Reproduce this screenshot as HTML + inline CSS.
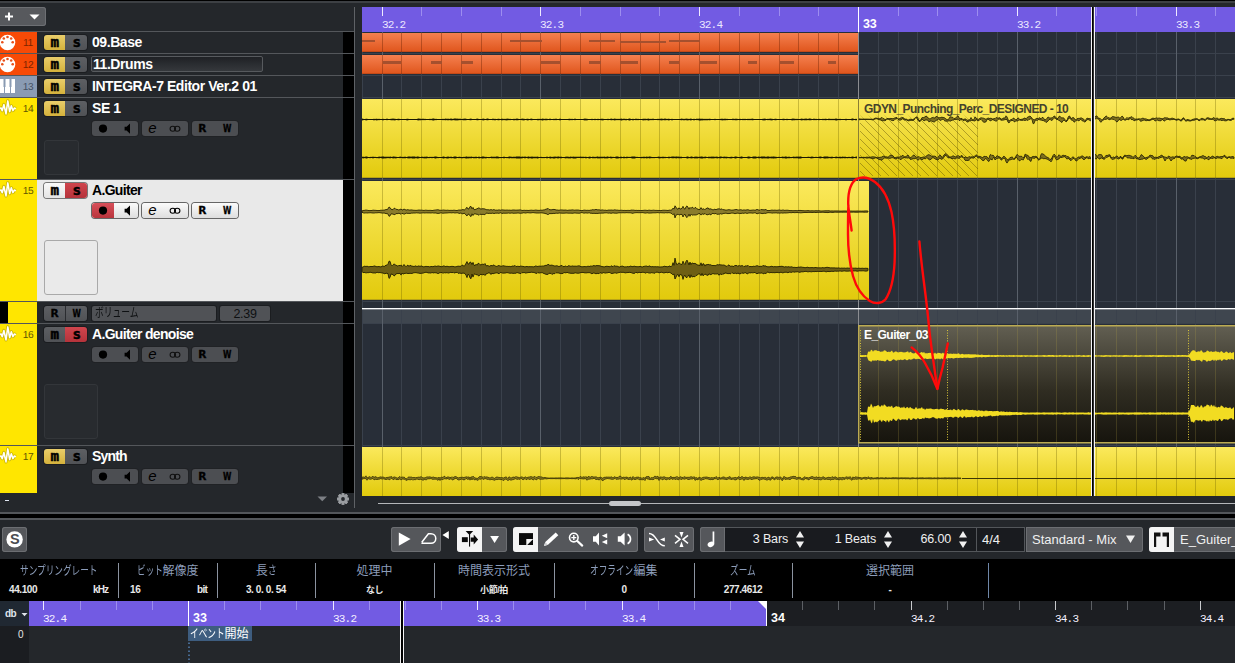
<!DOCTYPE html><html><head><meta charset="utf-8"><title>Cubase</title><style>*{box-sizing:border-box;margin:0;padding:0}
html,body{width:1235px;height:663px;overflow:hidden;background:#24272b}
body{position:relative;font-family:"Liberation Sans","Noto Sans CJK JP",sans-serif;font-size:12px;color:#fff}
.a{position:absolute}
svg{position:absolute;left:0;top:0;overflow:visible}
/* track list */
.sep{position:absolute;left:0;width:354px;height:1px;background:#54575b}
.strip{position:absolute;left:0;width:37px}
.num{position:absolute;left:21px;width:14px;text-align:center;font-size:10.2px;line-height:12px;letter-spacing:-0.3px;text-rendering:geometricPrecision}
.tname{position:absolute;left:92px;font-weight:bold;font-size:14px;line-height:16px;letter-spacing:-0.44px;white-space:nowrap;color:#fff}
.ms{position:absolute;left:44px;width:43px;height:15px;border-radius:3px;overflow:hidden;box-shadow:0 0 0 1px #1b1d20}
.ms i{position:absolute;top:0;height:15px;width:21px;font-style:normal}
.ms .m{left:0;background:linear-gradient(#e9cd6a,#d5b23c)}
.ms .s{left:21px;width:22px;background:linear-gradient(#5d5f63,#505256)}
.ms .m.off{background:linear-gradient(#5d5f63,#505256)}
.ms .s.on{background:linear-gradient(#d0454d,#b5333b)}
.sel .ms{box-shadow:0 0 0 1px #777}
.sel .ms .m.off{background:linear-gradient(#fafafa,#e4e4e4)}
.grp{position:absolute;width:46px;height:15px;border-radius:3px;background:#4c4e52;box-shadow:0 0 0 1px #202225;overflow:hidden}
.sel .grp{background:linear-gradient(#fbfbfb,#dedede);box-shadow:0 0 0 1px #666}
.thumb{position:absolute;left:44px;border:1px solid #33363a;border-radius:3px;background:#282b2f}
.sel .thumb{border-color:#a9a9a9;background:#eaeaea}
/* lower */
.tb{position:absolute;top:527px;height:25px;border-radius:3px;background:#55575b;box-shadow:inset 0 0 0 1px #6c6e72;overflow:hidden}
.ui{font-family:"Liberation Sans","Noto Sans CJK JP",sans-serif;font-size:13px;line-height:25px;color:#f0f0f0;white-space:nowrap}
.lab{position:absolute;top:564px;font-size:12px;line-height:14px;color:#8c9dba;text-align:center;white-space:nowrap}
.val{position:absolute;top:584px;font-size:10px;line-height:12px;font-weight:bold;color:#e8e8e8;white-space:nowrap;letter-spacing:-0.4px}
.vs{position:absolute;top:563px;width:1px;height:35px;background:#8b93a0}
.rl{position:absolute;font-family:"Liberation Mono",monospace;font-size:11px;line-height:12px;color:#f4f0ff;white-space:nowrap}
.rb{position:absolute;font-family:"Liberation Sans",sans-serif;font-weight:bold;font-size:12.5px;line-height:14px;color:#fff;white-space:nowrap}
</style></head><body>
<div class="a" style="left:0;top:0;width:1235px;height:1px;background:#000"></div>
<div class="a" style="left:0;top:1px;width:1235px;height:2px;background:#3d4044"></div>
<div class="a" style="left:-3px;top:7px;width:49px;height:19px;border-radius:3px;background:#57595d;box-shadow:inset 0 0 0 1px #6d6f73"></div>
<svg width="60" height="32"><path d="M5 16.5h8M9 12.5v8" stroke="#fff" stroke-width="2" fill="none"/><path d="M29.5 14.5h10l-5 5z" fill="#fff"/></svg>
<div class="a" style="left:0;top:32px;width:354px;height:21px">
<div class="a" style="left:37px;top:0;width:306px;height:21px;background:#24272b"></div>
<div class="strip" style="top:0;height:21px;background:#f74a06"></div>
<div class="num" style="top:6px;color:#7d2400">11</div>
<div class="ms" style="top:3px"><i class="m"></i><i class="s"></i></div>
<div class="tname" style="top:2px;">09.Base</div>
</div>
<div class="a" style="left:0;top:54px;width:354px;height:21px">
<div class="a" style="left:37px;top:0;width:306px;height:21px;background:#24272b"></div>
<div class="strip" style="top:0;height:21px;background:#f74a06"></div>
<div class="num" style="top:6px;color:#7d2400">12</div>
<div class="ms" style="top:3px"><i class="m"></i><i class="s"></i></div>
<div class="a" style="left:91px;top:2px;width:172px;height:16px;background:linear-gradient(#1f2125,#35383c);border:1px solid #575a5e;border-radius:2px"></div>
<div class="tname" style="top:2px;left:93px;">11.Drums</div>
</div>
<div class="a" style="left:0;top:76px;width:354px;height:21px">
<div class="a" style="left:37px;top:0;width:306px;height:21px;background:#24272b"></div>
<div class="strip" style="top:0;height:21px;background:#8a9bb3"></div>
<div class="num" style="top:6px;color:#465264">13</div>
<div class="ms" style="top:3px"><i class="m"></i><i class="s"></i></div>
<div class="tname" style="top:2px;">INTEGRA-7 Editor Ver.2 01</div>
</div>
<div class="a" style="left:0;top:98px;width:354px;height:81px">
<div class="a" style="left:37px;top:0;width:306px;height:81px;background:#24272b"></div>
<div class="strip" style="top:0;height:81px;background:#ffe600"></div>
<div class="num" style="top:6px;color:#5f5600">14</div>
<div class="ms" style="top:3px"><i class="m"></i><i class="s"></i></div>
<div class="tname" style="top:2px;">SE 1</div>
<div class="grp" style="left:92px;top:23px"></div>
<div class="grp" style="left:142px;top:23px"></div>
<div class="grp" style="left:192px;top:23px"></div>
</div>
<div class="thumb" style="top:140px;width:35px;height:35px"></div>
<div class="a sel" style="left:0;top:180px;width:354px;height:121px">
<div class="a" style="left:37px;top:0;width:306px;height:121px;background:#e9e9e9"></div>
<div class="strip" style="top:0;height:121px;background:#ffe600"></div>
<div class="num" style="top:6px;color:#5f5600">15</div>
<div class="ms" style="top:3px"><i class="m off"></i><i class="s on"></i></div>
<div class="tname" style="top:2px;letter-spacing:-0.68px;color:#000;">A.Guiter</div>
<div class="grp" style="left:92px;top:23px"></div>
<div class="grp" style="left:142px;top:23px"></div>
<div class="grp" style="left:192px;top:23px"></div>
<div class="a" style="left:92px;top:23px;width:22px;height:15px;border-radius:3px 0 0 3px;background:linear-gradient(#d8505a,#b8343c)"></div>
</div>
<div class="a sel"><div class="thumb" style="top:240px;width:54px;height:55px"></div></div>
<div class="a" style="left:0;top:324px;width:354px;height:121px">
<div class="a" style="left:37px;top:0;width:306px;height:121px;background:#24272b"></div>
<div class="strip" style="top:0;height:121px;background:#ffe600"></div>
<div class="num" style="top:6px;color:#5f5600">16</div>
<div class="ms" style="top:3px"><i class="m off"></i><i class="s on"></i></div>
<div class="tname" style="top:2px;letter-spacing:-0.68px;">A.Guiter denoise</div>
<div class="grp" style="left:92px;top:23px"></div>
<div class="grp" style="left:142px;top:23px"></div>
<div class="grp" style="left:192px;top:23px"></div>
</div>
<div class="thumb" style="top:384px;width:54px;height:55px"></div>
<div class="a" style="left:0;top:446px;width:354px;height:47px">
<div class="a" style="left:37px;top:0;width:306px;height:47px;background:#24272b"></div>
<div class="strip" style="top:0;height:47px;background:#ffe600"></div>
<div class="num" style="top:6px;color:#5f5600">17</div>
<div class="ms" style="top:3px"><i class="m"></i><i class="s"></i></div>
<div class="tname" style="top:2px;letter-spacing:-0.85px;">Synth</div>
<div class="grp" style="left:92px;top:23px"></div>
<div class="grp" style="left:142px;top:23px"></div>
<div class="grp" style="left:192px;top:23px"></div>
</div>
<div class="a" style="left:0;top:302px;width:8px;height:21px;background:#000"></div>
<div class="a" style="left:8px;top:302px;width:29px;height:21px;background:#ffe600"></div>
<div class="ms" style="top:306px"><i class="m off"></i><i class="s"></i><i style="left:21px;width:1px;background:#2a2c30"></i></div>
<div class="a" style="left:92px;top:306px;width:124px;height:15px;border-radius:2px;background:#505256;box-shadow:0 0 0 1px #1b1d20"></div>
<div class="a" style="left:95px;top:306px;font-size:12.5px;line-height:15px;color:#0e1012;white-space:nowrap"><span style="display:inline-block;transform:scaleX(0.7);transform-origin:0 50%;margin-right:-18.00px">ボリューム</span></div>
<div class="a" style="left:220px;top:306px;width:50px;height:15px;border-radius:2px;background:#505256;box-shadow:0 0 0 1px #1b1d20"></div>
<div class="a" style="left:220px;top:306px;width:50px;text-align:center;font-size:12.5px;line-height:16px;color:#0e1012;letter-spacing:-0.3px">2.39</div>
<div class="sep" style="top:31px"></div>
<div class="sep" style="top:53px"></div>
<div class="sep" style="top:75px"></div>
<div class="sep" style="top:97px"></div>
<div class="sep" style="top:179px"></div>
<div class="sep" style="top:301px"></div>
<div class="sep" style="top:323px"></div>
<div class="sep" style="top:445px"></div>
<div class="a" style="left:343px;top:32px;width:11px;height:461px;background:#000"></div>
<div class="a" style="left:354px;top:7px;width:1px;height:501px;background:#5f6266"></div>
<div class="a" style="left:343px;top:53px;width:11px;height:1px;background:#54575b"></div>
<div class="a" style="left:343px;top:75px;width:11px;height:1px;background:#54575b"></div>
<div class="a" style="left:343px;top:97px;width:11px;height:1px;background:#54575b"></div>
<div class="a" style="left:343px;top:179px;width:11px;height:1px;background:#54575b"></div>
<div class="a" style="left:343px;top:301px;width:11px;height:1px;background:#54575b"></div>
<div class="a" style="left:343px;top:323px;width:11px;height:1px;background:#54575b"></div>
<div class="a" style="left:343px;top:445px;width:11px;height:1px;background:#54575b"></div>
<div class="a" style="left:5px;top:500px;width:4px;height:1px;background:#dfe6f2"></div>
<svg width="362" height="520"><style>.msg{font:bold 13.8px "DejaVu Sans Mono",monospace;fill:#000;stroke:#000;stroke-width:0.45px}.rw{font:bold 10.4px "DejaVu Sans",sans-serif;fill:#000;stroke:#000;stroke-width:0.3px}.eg{font:italic 15px "Liberation Sans",sans-serif;fill:#000}</style><circle cx="7.5" cy="42.5" r="7.8" fill="#fff"/><circle cx="2.3" cy="42.2" r="1.3" fill="#e8501a"/><circle cx="3.8" cy="38.5" r="1.3" fill="#e8501a"/><circle cx="7.5" cy="37.0" r="1.3" fill="#e8501a"/><circle cx="11.2" cy="38.5" r="1.3" fill="#e8501a"/><circle cx="12.7" cy="42.2" r="1.3" fill="#e8501a"/><text x="50.6" y="47" class="msg" textLength="8.6" lengthAdjust="spacingAndGlyphs">m</text><text x="72.6" y="47" class="msg" textLength="8.6" lengthAdjust="spacingAndGlyphs">s</text><circle cx="7.5" cy="64.5" r="7.8" fill="#fff"/><circle cx="2.3" cy="64.2" r="1.3" fill="#e8501a"/><circle cx="3.8" cy="60.5" r="1.3" fill="#e8501a"/><circle cx="7.5" cy="59.0" r="1.3" fill="#e8501a"/><circle cx="11.2" cy="60.5" r="1.3" fill="#e8501a"/><circle cx="12.7" cy="64.2" r="1.3" fill="#e8501a"/><text x="50.6" y="69" class="msg" textLength="8.6" lengthAdjust="spacingAndGlyphs">m</text><text x="72.6" y="69" class="msg" textLength="8.6" lengthAdjust="spacingAndGlyphs">s</text><rect x="0" y="79" width="15" height="14" fill="#fff"/><rect x="3.5" y="79" width="2" height="8" fill="#8a9bb3"/><rect x="4" y="87" width="1" height="6" fill="#8a9bb3"/><rect x="9.5" y="79" width="2" height="8" fill="#8a9bb3"/><rect x="10" y="87" width="1" height="6" fill="#8a9bb3"/><text x="50.6" y="91" class="msg" textLength="8.6" lengthAdjust="spacingAndGlyphs">m</text><text x="72.6" y="91" class="msg" textLength="8.6" lengthAdjust="spacingAndGlyphs">s</text><polyline points="0.0,108.7 1.0,107.9 2.2,110.7 3.9,104.5 6.0,113.9 7.8,100.9 9.7,111.6 11.3,105.8 12.9,110.6 14.3,108.1 15.9,108.7" fill="none" stroke="#9c8a00" stroke-opacity="0.5" stroke-width="3.2" stroke-linejoin="round"/><polyline points="0.0,108.7 1.0,107.9 2.2,110.7 3.9,104.5 6.0,113.9 7.8,100.9 9.7,111.6 11.3,105.8 12.9,110.6 14.3,108.1 15.9,108.7" fill="none" stroke="#fff" stroke-width="1.55" stroke-linejoin="round"/><text x="50.6" y="113" class="msg" textLength="8.6" lengthAdjust="spacingAndGlyphs">m</text><text x="72.6" y="113" class="msg" textLength="8.6" lengthAdjust="spacingAndGlyphs">s</text><circle cx="103" cy="128.6" r="4.1" fill="#000"/><path d="M124.6 126.7 h2 l3.4 -3.2 v10.2 l-3.4 -3.2 h-2 z" fill="#000"/><text x="152.3" y="132.6" class="eg" text-anchor="middle">e</text><g fill="none" stroke="#111" stroke-width="1.1"><ellipse cx="172.8" cy="128.8" rx="2.7" ry="2.5"/><ellipse cx="177.2" cy="128.8" rx="2.7" ry="2.5"/></g><text x="198.2" y="132.2" class="rw" textLength="8.2" lengthAdjust="spacingAndGlyphs">R</text><text x="223" y="132.2" class="rw" textLength="8.4" lengthAdjust="spacingAndGlyphs">W</text><polyline points="0.0,190.7 1.0,189.9 2.2,192.7 3.9,186.5 6.0,195.9 7.8,182.9 9.7,193.6 11.3,187.8 12.9,192.6 14.3,190.1 15.9,190.7" fill="none" stroke="#9c8a00" stroke-opacity="0.5" stroke-width="3.2" stroke-linejoin="round"/><polyline points="0.0,190.7 1.0,189.9 2.2,192.7 3.9,186.5 6.0,195.9 7.8,182.9 9.7,193.6 11.3,187.8 12.9,192.6 14.3,190.1 15.9,190.7" fill="none" stroke="#fff" stroke-width="1.55" stroke-linejoin="round"/><text x="50.6" y="195" class="msg" textLength="8.6" lengthAdjust="spacingAndGlyphs">m</text><text x="72.6" y="195" class="msg" textLength="8.6" lengthAdjust="spacingAndGlyphs">s</text><circle cx="103" cy="210.6" r="4.1" fill="#000"/><path d="M124.6 208.7 h2 l3.4 -3.2 v10.2 l-3.4 -3.2 h-2 z" fill="#000"/><text x="152.3" y="214.6" class="eg" text-anchor="middle">e</text><g fill="none" stroke="#000" stroke-width="1.1"><ellipse cx="172.8" cy="210.8" rx="2.7" ry="2.5"/><ellipse cx="177.2" cy="210.8" rx="2.7" ry="2.5"/></g><text x="198.2" y="214.2" class="rw" textLength="8.2" lengthAdjust="spacingAndGlyphs">R</text><text x="223" y="214.2" class="rw" textLength="8.4" lengthAdjust="spacingAndGlyphs">W</text><polyline points="0.0,334.7 1.0,333.9 2.2,336.7 3.9,330.5 6.0,339.9 7.8,326.9 9.7,337.6 11.3,331.8 12.9,336.6 14.3,334.1 15.9,334.7" fill="none" stroke="#9c8a00" stroke-opacity="0.5" stroke-width="3.2" stroke-linejoin="round"/><polyline points="0.0,334.7 1.0,333.9 2.2,336.7 3.9,330.5 6.0,339.9 7.8,326.9 9.7,337.6 11.3,331.8 12.9,336.6 14.3,334.1 15.9,334.7" fill="none" stroke="#fff" stroke-width="1.55" stroke-linejoin="round"/><text x="50.6" y="339" class="msg" textLength="8.6" lengthAdjust="spacingAndGlyphs">m</text><text x="72.6" y="339" class="msg" textLength="8.6" lengthAdjust="spacingAndGlyphs">s</text><circle cx="103" cy="354.6" r="4.1" fill="#000"/><path d="M124.6 352.7 h2 l3.4 -3.2 v10.2 l-3.4 -3.2 h-2 z" fill="#000"/><text x="152.3" y="358.6" class="eg" text-anchor="middle">e</text><g fill="none" stroke="#111" stroke-width="1.1"><ellipse cx="172.8" cy="354.8" rx="2.7" ry="2.5"/><ellipse cx="177.2" cy="354.8" rx="2.7" ry="2.5"/></g><text x="198.2" y="358.2" class="rw" textLength="8.2" lengthAdjust="spacingAndGlyphs">R</text><text x="223" y="358.2" class="rw" textLength="8.4" lengthAdjust="spacingAndGlyphs">W</text><polyline points="0.0,456.7 1.0,455.9 2.2,458.7 3.9,452.5 6.0,461.9 7.8,448.9 9.7,459.6 11.3,453.8 12.9,458.6 14.3,456.1 15.9,456.7" fill="none" stroke="#9c8a00" stroke-opacity="0.5" stroke-width="3.2" stroke-linejoin="round"/><polyline points="0.0,456.7 1.0,455.9 2.2,458.7 3.9,452.5 6.0,461.9 7.8,448.9 9.7,459.6 11.3,453.8 12.9,458.6 14.3,456.1 15.9,456.7" fill="none" stroke="#fff" stroke-width="1.55" stroke-linejoin="round"/><text x="50.6" y="461" class="msg" textLength="8.6" lengthAdjust="spacingAndGlyphs">m</text><text x="72.6" y="461" class="msg" textLength="8.6" lengthAdjust="spacingAndGlyphs">s</text><circle cx="103" cy="476.6" r="4.1" fill="#000"/><path d="M124.6 474.7 h2 l3.4 -3.2 v10.2 l-3.4 -3.2 h-2 z" fill="#000"/><text x="152.3" y="480.6" class="eg" text-anchor="middle">e</text><g fill="none" stroke="#111" stroke-width="1.1"><ellipse cx="172.8" cy="476.8" rx="2.7" ry="2.5"/><ellipse cx="177.2" cy="476.8" rx="2.7" ry="2.5"/></g><text x="198.2" y="480.2" class="rw" textLength="8.2" lengthAdjust="spacingAndGlyphs">R</text><text x="223" y="480.2" class="rw" textLength="8.4" lengthAdjust="spacingAndGlyphs">W</text><text x="50.6" y="317.4" class="rw" textLength="8.2" lengthAdjust="spacingAndGlyphs">R</text><text x="72.4" y="317.4" class="rw" textLength="8.4" lengthAdjust="spacingAndGlyphs">W</text><path d="M317.5 496.5h9.5l-4.75 4.8z" fill="#7d8085"/><rect x="341.6" y="493.2" width="2.8" height="11.6" rx="0.6" transform="rotate(0 343 499)" fill="#9a9da1"/><rect x="341.6" y="493.2" width="2.8" height="11.6" rx="0.6" transform="rotate(45 343 499)" fill="#9a9da1"/><rect x="341.6" y="493.2" width="2.8" height="11.6" rx="0.6" transform="rotate(90 343 499)" fill="#9a9da1"/><rect x="341.6" y="493.2" width="2.8" height="11.6" rx="0.6" transform="rotate(135 343 499)" fill="#9a9da1"/><rect x="341.6" y="493.2" width="2.8" height="11.6" rx="0.6" transform="rotate(180 343 499)" fill="#9a9da1"/><rect x="341.6" y="493.2" width="2.8" height="11.6" rx="0.6" transform="rotate(225 343 499)" fill="#9a9da1"/><rect x="341.6" y="493.2" width="2.8" height="11.6" rx="0.6" transform="rotate(270 343 499)" fill="#9a9da1"/><rect x="341.6" y="493.2" width="2.8" height="11.6" rx="0.6" transform="rotate(315 343 499)" fill="#9a9da1"/><circle cx="343" cy="499" r="4.1" fill="#9a9da1"/><circle cx="343" cy="499" r="1.9" fill="#24272b"/></svg>
<svg width="1235" height="520" shape-rendering="auto"><defs><linearGradient id="gy" x1="0" y1="0" x2="0" y2="1"><stop offset="0" stop-color="#fbe95c"/><stop offset="1" stop-color="#e2ca0c"/></linearGradient><linearGradient id="go" x1="0" y1="0" x2="0" y2="1"><stop offset="0" stop-color="#f5804f"/><stop offset="1" stop-color="#df551c"/></linearGradient><linearGradient id="gd" x1="0" y1="0" x2="0" y2="1"><stop offset="0" stop-color="#625f52"/><stop offset="0.55" stop-color="#302d22"/><stop offset="1" stop-color="#16140d"/></linearGradient><pattern id="hatch" width="8" height="8" patternUnits="userSpaceOnUse" patternTransform="translate(0,7)"><path d="M0 0L8 8M-2 6L2 10M6 -2L10 2" stroke="#5f5208" stroke-opacity="0.5" stroke-width="0.9" fill="none"/></pattern><linearGradient id="hf" x1="0" y1="0" x2="0" y2="1"><stop offset="0" stop-color="#fff" stop-opacity="0"/><stop offset="0.12" stop-color="#fff" stop-opacity="1"/><stop offset="1" stop-color="#fff"/></linearGradient><mask id="hm"><rect x="860" y="114" width="118" height="62" fill="url(#hf)"/></mask></defs><rect x="362" y="32" width="873" height="464" fill="#282e38"/><rect x="362" y="7" width="873" height="25" fill="#725be3"/><rect x="362" y="309" width="873" height="14" fill="#3f464f"/><rect x="362" y="53" width="873" height="1" fill="#3a414c"/><rect x="362" y="75" width="873" height="1" fill="#3a414c"/><rect x="362" y="97" width="873" height="1" fill="#3a414c"/><rect x="362" y="179" width="873" height="1" fill="#3a414c"/><rect x="362" y="301" width="873" height="1" fill="#3a414c"/><rect x="362" y="323" width="873" height="1" fill="#3a414c"/><rect x="362" y="445" width="873" height="1" fill="#3a414c"/><rect x="362" y="32" width="1" height="464" fill="#3a414c"/><rect x="382" y="32" width="1" height="464" fill="#59606a"/><rect x="401" y="32" width="1" height="464" fill="#3a414c"/><rect x="421" y="32" width="1" height="464" fill="#3a414c"/><rect x="441" y="32" width="1" height="464" fill="#3a414c"/><rect x="461" y="32" width="1" height="464" fill="#3a414c"/><rect x="481" y="32" width="1" height="464" fill="#3a414c"/><rect x="501" y="32" width="1" height="464" fill="#3a414c"/><rect x="520" y="32" width="1" height="464" fill="#3a414c"/><rect x="540" y="32" width="1" height="464" fill="#59606a"/><rect x="560" y="32" width="1" height="464" fill="#3a414c"/><rect x="580" y="32" width="1" height="464" fill="#3a414c"/><rect x="600" y="32" width="1" height="464" fill="#3a414c"/><rect x="620" y="32" width="1" height="464" fill="#3a414c"/><rect x="640" y="32" width="1" height="464" fill="#3a414c"/><rect x="659" y="32" width="1" height="464" fill="#3a414c"/><rect x="679" y="32" width="1" height="464" fill="#3a414c"/><rect x="699" y="32" width="1" height="464" fill="#59606a"/><rect x="719" y="32" width="1" height="464" fill="#3a414c"/><rect x="739" y="32" width="1" height="464" fill="#3a414c"/><rect x="759" y="32" width="1" height="464" fill="#3a414c"/><rect x="779" y="32" width="1" height="464" fill="#3a414c"/><rect x="798" y="32" width="1" height="464" fill="#3a414c"/><rect x="818" y="32" width="1" height="464" fill="#3a414c"/><rect x="838" y="32" width="1" height="464" fill="#3a414c"/><rect x="858" y="32" width="1" height="464" fill="#8b8d91"/><rect x="878" y="32" width="1" height="464" fill="#3a414c"/><rect x="898" y="32" width="1" height="464" fill="#3a414c"/><rect x="917" y="32" width="1" height="464" fill="#3a414c"/><rect x="937" y="32" width="1" height="464" fill="#3a414c"/><rect x="957" y="32" width="1" height="464" fill="#3a414c"/><rect x="977" y="32" width="1" height="464" fill="#3a414c"/><rect x="997" y="32" width="1" height="464" fill="#3a414c"/><rect x="1017" y="32" width="1" height="464" fill="#59606a"/><rect x="1037" y="32" width="1" height="464" fill="#3a414c"/><rect x="1056" y="32" width="1" height="464" fill="#3a414c"/><rect x="1076" y="32" width="1" height="464" fill="#3a414c"/><rect x="1096" y="32" width="1" height="464" fill="#3a414c"/><rect x="1116" y="32" width="1" height="464" fill="#3a414c"/><rect x="1136" y="32" width="1" height="464" fill="#3a414c"/><rect x="1156" y="32" width="1" height="464" fill="#3a414c"/><rect x="1176" y="32" width="1" height="464" fill="#59606a"/><rect x="1195" y="32" width="1" height="464" fill="#3a414c"/><rect x="1215" y="32" width="1" height="464" fill="#3a414c"/><rect x="362" y="308" width="873" height="1" fill="#fbfcfd"/><rect x="362" y="309" width="873" height="1" fill="#fff" fill-opacity="0.35"/><rect x="362" y="33" width="496" height="19" fill="url(#go)"/><rect x="362" y="51" width="496" height="1" fill="#c44a18"/><rect x="382" y="33" width="1" height="19" fill="#7a2a08" fill-opacity="0.45"/><rect x="401" y="33" width="1" height="19" fill="#7a2a08" fill-opacity="0.45"/><rect x="421" y="33" width="1" height="19" fill="#7a2a08" fill-opacity="0.45"/><rect x="441" y="33" width="1" height="19" fill="#7a2a08" fill-opacity="0.45"/><rect x="461" y="33" width="1" height="19" fill="#7a2a08" fill-opacity="0.45"/><rect x="481" y="33" width="1" height="19" fill="#7a2a08" fill-opacity="0.45"/><rect x="501" y="33" width="1" height="19" fill="#7a2a08" fill-opacity="0.45"/><rect x="520" y="33" width="1" height="19" fill="#7a2a08" fill-opacity="0.45"/><rect x="540" y="33" width="1" height="19" fill="#7a2a08" fill-opacity="0.45"/><rect x="560" y="33" width="1" height="19" fill="#7a2a08" fill-opacity="0.45"/><rect x="580" y="33" width="1" height="19" fill="#7a2a08" fill-opacity="0.45"/><rect x="600" y="33" width="1" height="19" fill="#7a2a08" fill-opacity="0.45"/><rect x="620" y="33" width="1" height="19" fill="#7a2a08" fill-opacity="0.45"/><rect x="640" y="33" width="1" height="19" fill="#7a2a08" fill-opacity="0.45"/><rect x="659" y="33" width="1" height="19" fill="#7a2a08" fill-opacity="0.45"/><rect x="679" y="33" width="1" height="19" fill="#7a2a08" fill-opacity="0.45"/><rect x="699" y="33" width="1" height="19" fill="#7a2a08" fill-opacity="0.45"/><rect x="719" y="33" width="1" height="19" fill="#7a2a08" fill-opacity="0.45"/><rect x="739" y="33" width="1" height="19" fill="#7a2a08" fill-opacity="0.45"/><rect x="759" y="33" width="1" height="19" fill="#7a2a08" fill-opacity="0.45"/><rect x="779" y="33" width="1" height="19" fill="#7a2a08" fill-opacity="0.45"/><rect x="798" y="33" width="1" height="19" fill="#7a2a08" fill-opacity="0.45"/><rect x="818" y="33" width="1" height="19" fill="#7a2a08" fill-opacity="0.45"/><rect x="838" y="33" width="1" height="19" fill="#7a2a08" fill-opacity="0.45"/><rect x="362" y="55" width="496" height="19" fill="url(#go)"/><rect x="362" y="73" width="496" height="1" fill="#c44a18"/><rect x="382" y="55" width="1" height="19" fill="#7a2a08" fill-opacity="0.45"/><rect x="401" y="55" width="1" height="19" fill="#7a2a08" fill-opacity="0.45"/><rect x="421" y="55" width="1" height="19" fill="#7a2a08" fill-opacity="0.45"/><rect x="441" y="55" width="1" height="19" fill="#7a2a08" fill-opacity="0.45"/><rect x="461" y="55" width="1" height="19" fill="#7a2a08" fill-opacity="0.45"/><rect x="481" y="55" width="1" height="19" fill="#7a2a08" fill-opacity="0.45"/><rect x="501" y="55" width="1" height="19" fill="#7a2a08" fill-opacity="0.45"/><rect x="520" y="55" width="1" height="19" fill="#7a2a08" fill-opacity="0.45"/><rect x="540" y="55" width="1" height="19" fill="#7a2a08" fill-opacity="0.45"/><rect x="560" y="55" width="1" height="19" fill="#7a2a08" fill-opacity="0.45"/><rect x="580" y="55" width="1" height="19" fill="#7a2a08" fill-opacity="0.45"/><rect x="600" y="55" width="1" height="19" fill="#7a2a08" fill-opacity="0.45"/><rect x="620" y="55" width="1" height="19" fill="#7a2a08" fill-opacity="0.45"/><rect x="640" y="55" width="1" height="19" fill="#7a2a08" fill-opacity="0.45"/><rect x="659" y="55" width="1" height="19" fill="#7a2a08" fill-opacity="0.45"/><rect x="679" y="55" width="1" height="19" fill="#7a2a08" fill-opacity="0.45"/><rect x="699" y="55" width="1" height="19" fill="#7a2a08" fill-opacity="0.45"/><rect x="719" y="55" width="1" height="19" fill="#7a2a08" fill-opacity="0.45"/><rect x="739" y="55" width="1" height="19" fill="#7a2a08" fill-opacity="0.45"/><rect x="759" y="55" width="1" height="19" fill="#7a2a08" fill-opacity="0.45"/><rect x="779" y="55" width="1" height="19" fill="#7a2a08" fill-opacity="0.45"/><rect x="798" y="55" width="1" height="19" fill="#7a2a08" fill-opacity="0.45"/><rect x="818" y="55" width="1" height="19" fill="#7a2a08" fill-opacity="0.45"/><rect x="838" y="55" width="1" height="19" fill="#7a2a08" fill-opacity="0.45"/><rect x="362" y="40" width="13" height="2" fill="#a5502e"/><rect x="510" y="40" width="32" height="2" fill="#a5502e"/><rect x="589" y="40" width="26" height="2" fill="#a5502e"/><rect x="620" y="41" width="46" height="2" fill="#a5502e"/><rect x="669" y="40" width="31" height="2" fill="#a5502e"/><rect x="383" y="61" width="18" height="3" fill="#a5502e"/><rect x="431" y="61" width="11" height="3" fill="#a5502e"/><rect x="461" y="61" width="12" height="3" fill="#a5502e"/><rect x="541" y="61" width="19" height="3" fill="#a5502e"/><rect x="589" y="61" width="12" height="3" fill="#a5502e"/><rect x="620" y="61" width="18" height="3" fill="#a5502e"/><rect x="669" y="61" width="10" height="3" fill="#a5502e"/><rect x="700" y="61" width="17" height="3" fill="#a5502e"/><rect x="748" y="61" width="9" height="3" fill="#a5502e"/><rect x="780" y="61" width="14" height="3" fill="#a5502e"/><rect x="828" y="61" width="8" height="3" fill="#a5502e"/><rect x="362" y="99" width="496" height="79" fill="url(#gy)"/><rect x="859" y="99" width="376" height="79" fill="url(#gy)"/><rect x="362" y="177" width="873" height="1" fill="#b8a416"/><rect x="382" y="99" width="1" height="79" fill="#6b5d00" fill-opacity="0.33"/><rect x="401" y="99" width="1" height="79" fill="#6b5d00" fill-opacity="0.33"/><rect x="421" y="99" width="1" height="79" fill="#6b5d00" fill-opacity="0.33"/><rect x="441" y="99" width="1" height="79" fill="#6b5d00" fill-opacity="0.33"/><rect x="461" y="99" width="1" height="79" fill="#6b5d00" fill-opacity="0.33"/><rect x="481" y="99" width="1" height="79" fill="#6b5d00" fill-opacity="0.33"/><rect x="501" y="99" width="1" height="79" fill="#6b5d00" fill-opacity="0.33"/><rect x="520" y="99" width="1" height="79" fill="#6b5d00" fill-opacity="0.33"/><rect x="540" y="99" width="1" height="79" fill="#6b5d00" fill-opacity="0.33"/><rect x="560" y="99" width="1" height="79" fill="#6b5d00" fill-opacity="0.33"/><rect x="580" y="99" width="1" height="79" fill="#6b5d00" fill-opacity="0.33"/><rect x="600" y="99" width="1" height="79" fill="#6b5d00" fill-opacity="0.33"/><rect x="620" y="99" width="1" height="79" fill="#6b5d00" fill-opacity="0.33"/><rect x="640" y="99" width="1" height="79" fill="#6b5d00" fill-opacity="0.33"/><rect x="659" y="99" width="1" height="79" fill="#6b5d00" fill-opacity="0.33"/><rect x="679" y="99" width="1" height="79" fill="#6b5d00" fill-opacity="0.33"/><rect x="699" y="99" width="1" height="79" fill="#6b5d00" fill-opacity="0.33"/><rect x="719" y="99" width="1" height="79" fill="#6b5d00" fill-opacity="0.33"/><rect x="739" y="99" width="1" height="79" fill="#6b5d00" fill-opacity="0.33"/><rect x="759" y="99" width="1" height="79" fill="#6b5d00" fill-opacity="0.33"/><rect x="779" y="99" width="1" height="79" fill="#6b5d00" fill-opacity="0.33"/><rect x="798" y="99" width="1" height="79" fill="#6b5d00" fill-opacity="0.33"/><rect x="818" y="99" width="1" height="79" fill="#6b5d00" fill-opacity="0.33"/><rect x="838" y="99" width="1" height="79" fill="#6b5d00" fill-opacity="0.33"/><rect x="858" y="99" width="1" height="79" fill="#6b5d00" fill-opacity="0.33"/><rect x="878" y="99" width="1" height="79" fill="#6b5d00" fill-opacity="0.33"/><rect x="898" y="99" width="1" height="79" fill="#6b5d00" fill-opacity="0.33"/><rect x="917" y="99" width="1" height="79" fill="#6b5d00" fill-opacity="0.33"/><rect x="937" y="99" width="1" height="79" fill="#6b5d00" fill-opacity="0.33"/><rect x="957" y="99" width="1" height="79" fill="#6b5d00" fill-opacity="0.33"/><rect x="977" y="99" width="1" height="79" fill="#6b5d00" fill-opacity="0.33"/><rect x="997" y="99" width="1" height="79" fill="#6b5d00" fill-opacity="0.33"/><rect x="1017" y="99" width="1" height="79" fill="#6b5d00" fill-opacity="0.33"/><rect x="1037" y="99" width="1" height="79" fill="#6b5d00" fill-opacity="0.33"/><rect x="1056" y="99" width="1" height="79" fill="#6b5d00" fill-opacity="0.33"/><rect x="1076" y="99" width="1" height="79" fill="#6b5d00" fill-opacity="0.33"/><rect x="1096" y="99" width="1" height="79" fill="#6b5d00" fill-opacity="0.33"/><rect x="1116" y="99" width="1" height="79" fill="#6b5d00" fill-opacity="0.33"/><rect x="1136" y="99" width="1" height="79" fill="#6b5d00" fill-opacity="0.33"/><rect x="1156" y="99" width="1" height="79" fill="#6b5d00" fill-opacity="0.33"/><rect x="1176" y="99" width="1" height="79" fill="#6b5d00" fill-opacity="0.33"/><rect x="1195" y="99" width="1" height="79" fill="#6b5d00" fill-opacity="0.33"/><rect x="1215" y="99" width="1" height="79" fill="#6b5d00" fill-opacity="0.33"/><rect x="858" y="99" width="1" height="79" fill="#8a7d33"/><rect x="860" y="114" width="118" height="62" fill="url(#hatch)" mask="url(#hm)"/><polygon points="362,118.6 363,118.8 364,119.1 365,119.0 366,118.7 367,118.8 368,119.0 369,119.0 370,119.0 371,119.0 372,119.1 373,119.0 374,118.7 375,119.0 376,118.7 377,118.8 378,119.1 379,118.7 380,119.1 381,119.1 382,119.0 383,118.7 384,119.0 385,119.1 386,119.1 387,118.6 388,119.0 389,119.0 390,119.0 391,118.8 392,118.8 393,118.6 394,118.7 395,118.7 396,119.0 397,119.0 398,118.7 399,118.7 400,119.0 401,119.0 402,119.1 403,119.1 404,119.1 405,119.0 406,119.1 407,118.8 408,118.8 409,119.1 410,119.0 411,119.1 412,119.1 413,119.0 414,119.0 415,119.0 416,119.0 417,119.0 418,118.6 419,118.6 420,118.7 421,118.8 422,119.0 423,118.6 424,119.0 425,118.7 426,119.0 427,119.0 428,119.0 429,119.1 430,118.8 431,119.1 432,118.7 433,118.6 434,118.6 435,119.0 436,118.8 437,119.1 438,119.1 439,119.1 440,119.0 441,119.1 442,119.1 443,118.7 444,119.1 445,118.7 446,118.6 447,119.1 448,118.6 449,119.0 450,118.8 451,118.6 452,118.8 453,119.1 454,118.6 455,118.6 456,118.6 457,118.7 458,118.6 459,119.0 460,118.6 461,119.0 462,119.0 463,118.7 464,118.7 465,118.6 466,118.7 467,119.0 468,119.1 469,119.0 470,118.7 471,118.6 472,119.0 473,119.0 474,119.0 475,119.1 476,119.1 477,118.6 478,118.7 479,119.0 480,119.0 481,119.0 482,119.0 483,118.6 484,118.8 485,119.1 486,119.0 487,118.6 488,118.6 489,119.1 490,119.0 491,119.1 492,119.0 493,118.6 494,119.1 495,118.7 496,119.0 497,119.0 498,118.7 499,118.8 500,119.0 501,119.0 502,118.6 503,119.1 504,118.7 505,119.1 506,118.7 507,118.7 508,118.6 509,119.1 510,118.8 511,119.1 512,119.1 513,119.0 514,118.8 515,119.0 516,118.7 517,118.6 518,118.7 519,119.0 520,119.0 521,119.0 522,118.6 523,118.8 524,118.7 525,119.0 526,119.0 527,118.8 528,118.7 529,119.1 530,119.0 531,118.6 532,118.8 533,119.1 534,119.1 535,119.1 536,119.1 537,119.0 538,118.8 539,119.0 540,118.8 541,119.0 542,118.7 543,118.6 544,119.1 545,118.7 546,118.7 547,118.7 548,119.1 549,119.0 550,118.6 551,119.0 552,119.1 553,119.0 554,118.7 555,119.1 556,118.6 557,119.1 558,119.0 559,119.1 560,118.6 561,119.1 562,119.0 563,119.0 564,119.1 565,119.1 566,119.1 567,119.1 568,119.1 569,118.7 570,118.7 571,119.0 572,118.7 573,119.0 574,119.0 575,118.6 576,119.1 577,119.0 578,119.0 579,119.1 580,119.1 581,119.0 582,119.1 583,119.0 584,118.7 585,118.6 586,118.7 587,118.7 588,119.0 589,119.1 590,119.0 591,119.0 592,118.7 593,119.1 594,119.1 595,118.7 596,119.0 597,119.0 598,118.8 599,119.1 600,119.1 601,118.7 602,118.7 603,118.8 604,119.1 605,119.0 606,119.1 607,119.1 608,118.8 609,119.1 610,119.1 611,118.6 612,118.8 613,119.1 614,118.8 615,118.6 616,119.0 617,118.8 618,119.0 619,118.7 620,119.1 621,118.6 622,118.7 623,119.1 624,118.6 625,119.0 626,118.8 627,119.1 628,119.1 629,118.6 630,118.6 631,119.1 632,119.0 633,118.7 634,119.1 635,119.0 636,118.6 637,119.0 638,118.8 639,119.0 640,119.1 641,119.1 642,119.1 643,118.7 644,118.7 645,118.7 646,118.7 647,119.0 648,118.6 649,118.8 650,119.0 651,118.8 652,119.1 653,118.6 654,119.1 655,119.1 656,119.1 657,119.0 658,118.8 659,119.1 660,118.8 661,118.7 662,118.6 663,119.0 664,118.8 665,118.6 666,118.7 667,119.0 668,118.8 669,118.7 670,119.0 671,119.1 672,118.8 673,119.0 674,119.0 675,119.0 676,119.1 677,119.1 678,119.0 679,119.0 680,119.1 681,118.7 682,118.6 683,119.0 684,118.7 685,119.1 686,118.6 687,118.7 688,118.8 689,119.1 690,118.8 691,118.6 692,119.1 693,119.0 694,118.8 695,119.1 696,119.0 697,118.6 698,119.0 699,118.6 700,118.8 701,118.8 702,118.8 703,118.8 704,119.1 705,118.7 706,119.1 707,118.7 708,119.0 709,118.7 710,118.8 711,119.0 712,119.0 713,119.0 714,119.0 715,118.8 716,119.1 717,119.1 718,119.1 719,119.0 720,119.1 721,118.7 722,118.8 723,118.8 724,119.0 725,118.6 726,119.0 727,118.8 728,119.1 729,119.1 730,119.1 731,119.0 732,119.0 733,118.6 734,119.0 735,118.7 736,118.8 737,118.8 738,119.1 739,119.1 740,118.8 741,119.0 742,119.1 743,118.8 744,119.1 745,118.7 746,119.0 747,119.0 748,118.8 749,119.0 750,118.8 751,119.1 752,118.6 753,118.7 754,119.0 755,119.1 756,119.0 757,119.0 758,119.1 759,119.0 760,119.1 761,119.1 762,119.1 763,118.8 764,118.7 765,118.6 766,119.1 767,119.1 768,118.7 769,119.0 770,118.6 771,118.7 772,118.7 773,119.0 774,119.0 775,118.7 776,118.7 777,119.0 778,119.1 779,119.0 780,119.0 781,119.0 782,119.0 783,118.7 784,118.7 785,119.0 786,119.1 787,118.7 788,119.1 789,119.1 790,119.1 791,119.1 792,118.7 793,118.6 794,118.7 795,118.7 796,119.0 797,118.8 798,119.0 799,119.1 800,119.1 801,118.8 802,118.6 803,119.0 804,118.7 805,118.7 806,118.6 807,118.7 808,119.1 809,118.6 810,118.6 811,118.8 812,119.1 813,119.0 814,118.6 815,119.0 816,118.7 817,119.0 818,119.1 819,118.8 820,119.1 821,119.1 822,119.0 823,118.7 824,119.0 825,118.7 826,118.7 827,119.1 828,119.0 829,118.6 830,119.1 831,118.7 832,119.0 833,118.7 834,119.0 835,118.7 836,118.6 837,118.7 838,119.1 839,119.1 840,118.7 841,119.1 842,119.1 843,119.0 844,119.0 845,119.1 846,118.7 847,119.1 848,119.0 849,119.1 850,119.0 851,119.0 852,118.6 853,118.6 854,119.1 855,119.0 856,118.8 857,119.1 857,120.0 856,120.4 855,119.9 854,119.9 853,120.3 852,120.4 851,120.0 850,119.9 849,119.9 848,119.9 847,120.0 846,120.4 845,120.0 844,119.9 843,119.9 842,119.9 841,119.9 840,120.2 839,120.0 838,120.0 837,120.4 836,120.4 835,120.3 834,120.0 833,120.3 832,120.0 831,120.3 830,119.9 829,120.3 828,120.0 827,119.9 826,120.2 825,120.2 824,119.9 823,120.2 822,119.9 821,119.9 820,120.0 819,120.3 818,119.9 817,120.0 816,120.3 815,120.0 814,120.2 813,119.9 812,120.0 811,120.3 810,120.3 809,120.3 808,119.9 807,120.3 806,120.2 805,120.3 804,120.2 803,119.9 802,120.4 801,120.2 800,119.9 799,119.9 798,120.0 797,120.2 796,120.0 795,120.2 794,120.2 793,120.2 792,120.4 791,120.0 790,119.9 789,119.9 788,119.9 787,120.3 786,120.0 785,120.0 784,120.3 783,120.2 782,119.9 781,120.0 780,119.9 779,120.0 778,119.9 777,120.0 776,120.2 775,120.2 774,120.0 773,120.0 772,120.4 771,120.3 770,120.3 769,119.9 768,120.2 767,120.0 766,119.9 765,120.4 764,120.3 763,120.4 762,120.0 761,120.0 760,119.9 759,119.9 758,120.0 757,120.0 756,120.0 755,119.9 754,119.9 753,120.3 752,120.3 751,119.9 750,120.2 749,119.9 748,120.2 747,120.0 746,119.9 745,120.2 744,119.9 743,120.2 742,119.9 741,120.0 740,120.3 739,120.0 738,119.9 737,120.3 736,120.3 735,120.3 734,119.9 733,120.2 732,119.9 731,120.0 730,120.0 729,119.9 728,119.9 727,120.3 726,120.0 725,120.4 724,119.9 723,120.4 722,120.2 721,120.3 720,119.9 719,119.9 718,119.9 717,119.9 716,119.9 715,120.2 714,119.9 713,119.9 712,119.9 711,120.0 710,120.3 709,120.3 708,119.9 707,120.4 706,119.9 705,120.4 704,119.9 703,120.4 702,120.2 701,120.4 700,120.4 699,120.4 698,119.9 697,120.2 696,120.0 695,120.0 694,120.4 693,120.0 692,120.0 691,120.4 690,120.2 689,120.0 688,120.4 687,120.2 686,120.3 685,120.0 684,120.4 683,119.9 682,120.3 681,120.2 680,120.0 679,119.9 678,119.9 677,119.9 676,119.9 675,120.0 674,120.0 673,119.9 672,120.4 671,120.0 670,120.0 669,120.4 668,120.3 667,119.9 666,120.3 665,120.3 664,120.3 663,119.9 662,120.4 661,120.2 660,120.2 659,120.0 658,120.3 657,120.0 656,119.9 655,120.0 654,119.9 653,120.3 652,120.0 651,120.3 650,119.9 649,120.4 648,120.4 647,119.9 646,120.2 645,120.3 644,120.2 643,120.4 642,119.9 641,119.9 640,120.0 639,120.0 638,120.3 637,119.9 636,120.2 635,120.0 634,120.0 633,120.4 632,119.9 631,119.9 630,120.4 629,120.4 628,119.9 627,119.9 626,120.4 625,119.9 624,120.3 623,119.9 622,120.4 621,120.4 620,119.9 619,120.2 618,119.9 617,120.3 616,120.0 615,120.4 614,120.3 613,120.0 612,120.2 611,120.2 610,120.0 609,120.0 608,120.3 607,119.9 606,119.9 605,120.0 604,120.0 603,120.4 602,120.3 601,120.3 600,119.9 599,119.9 598,120.3 597,119.9 596,120.0 595,120.3 594,119.9 593,119.9 592,120.2 591,119.9 590,119.9 589,119.9 588,120.0 587,120.4 586,120.2 585,120.4 584,120.2 583,120.0 582,119.9 581,120.0 580,120.0 579,120.0 578,120.0 577,119.9 576,119.9 575,120.2 574,120.0 573,119.9 572,120.3 571,119.9 570,120.2 569,120.3 568,120.0 567,119.9 566,120.0 565,119.9 564,120.0 563,119.9 562,120.0 561,119.9 560,120.4 559,119.9 558,120.0 557,120.0 556,120.2 555,120.0 554,120.2 553,119.9 552,119.9 551,120.0 550,120.3 549,120.0 548,120.0 547,120.3 546,120.3 545,120.3 544,120.0 543,120.4 542,120.4 541,119.9 540,120.2 539,119.9 538,120.4 537,120.0 536,120.0 535,119.9 534,120.0 533,120.0 532,120.2 531,120.2 530,120.0 529,119.9 528,120.4 527,120.3 526,120.0 525,120.0 524,120.4 523,120.2 522,120.3 521,120.0 520,119.9 519,120.0 518,120.2 517,120.2 516,120.2 515,119.9 514,120.4 513,120.0 512,119.9 511,120.0 510,120.3 509,119.9 508,120.2 507,120.2 506,120.4 505,119.9 504,120.2 503,119.9 502,120.4 501,120.0 500,119.9 499,120.3 498,120.3 497,119.9 496,119.9 495,120.4 494,119.9 493,120.2 492,120.0 491,119.9 490,119.9 489,119.9 488,120.3 487,120.3 486,120.0 485,119.9 484,120.2 483,120.4 482,120.0 481,120.0 480,120.0 479,120.0 478,120.3 477,120.3 476,119.9 475,119.9 474,120.0 473,120.0 472,119.9 471,120.3 470,120.3 469,119.9 468,119.9 467,120.0 466,120.3 465,120.3 464,120.2 463,120.3 462,119.9 461,119.9 460,120.2 459,119.9 458,120.4 457,120.2 456,120.4 455,120.3 454,120.3 453,120.0 452,120.4 451,120.3 450,120.3 449,119.9 448,120.4 447,119.9 446,120.3 445,120.3 444,119.9 443,120.3 442,119.9 441,120.0 440,119.9 439,120.0 438,120.0 437,120.0 436,120.2 435,120.0 434,120.4 433,120.4 432,120.3 431,119.9 430,120.2 429,119.9 428,120.0 427,119.9 426,119.9 425,120.3 424,120.0 423,120.3 422,119.9 421,120.3 420,120.3 419,120.2 418,120.4 417,120.0 416,120.0 415,119.9 414,119.9 413,120.0 412,120.0 411,120.0 410,119.9 409,119.9 408,120.3 407,120.4 406,120.0 405,119.9 404,120.0 403,120.0 402,120.0 401,119.9 400,120.0 399,120.2 398,120.2 397,120.0 396,119.9 395,120.4 394,120.3 393,120.3 392,120.3 391,120.2 390,119.9 389,119.9 388,120.0 387,120.3 386,120.0 385,120.0 384,120.0 383,120.4 382,120.0 381,119.9 380,119.9 379,120.3 378,120.0 377,120.4 376,120.3 375,119.9 374,120.4 373,120.0 372,119.9 371,119.9 370,120.0 369,119.9 368,120.0 367,120.2 366,120.4 365,120.0 364,120.0 363,120.2 362,120.4" fill="#1a1700" stroke-linejoin="round"/><polygon points="362,156.9 363,156.4 364,157.0 365,156.8 366,156.5 367,156.5 368,156.9 369,156.9 370,157.0 371,156.8 372,156.9 373,156.6 374,157.0 375,156.8 376,156.9 377,156.9 378,157.0 379,156.6 380,156.8 381,156.8 382,156.5 383,156.4 384,156.4 385,156.9 386,156.5 387,157.0 388,156.5 389,156.9 390,156.5 391,156.8 392,156.9 393,156.6 394,156.5 395,156.8 396,156.7 397,156.9 398,156.9 399,157.0 400,156.5 401,156.8 402,156.9 403,156.7 404,156.9 405,156.6 406,156.9 407,156.9 408,156.6 409,156.6 410,156.6 411,156.8 412,156.6 413,156.6 414,156.6 415,156.5 416,156.9 417,156.4 418,156.6 419,156.8 420,156.9 421,156.9 422,156.4 423,156.9 424,156.7 425,156.7 426,156.7 427,156.6 428,156.9 429,156.9 430,156.8 431,156.9 432,156.7 433,156.9 434,156.8 435,156.6 436,156.6 437,156.8 438,156.9 439,156.9 440,156.9 441,156.9 442,156.9 443,156.6 444,156.5 445,156.9 446,156.9 447,156.7 448,156.6 449,156.7 450,156.9 451,156.4 452,157.0 453,157.0 454,156.6 455,156.5 456,156.5 457,156.9 458,156.9 459,156.8 460,156.8 461,156.9 462,157.0 463,157.0 464,156.8 465,156.9 466,156.4 467,156.6 468,156.9 469,156.4 470,157.0 471,156.6 472,156.8 473,156.9 474,156.7 475,156.9 476,156.5 477,156.9 478,156.9 479,156.5 480,157.0 481,156.9 482,156.4 483,156.5 484,156.6 485,157.0 486,156.7 487,157.0 488,156.9 489,156.9 490,157.0 491,156.8 492,156.5 493,157.0 494,156.5 495,156.9 496,156.6 497,156.5 498,156.5 499,157.0 500,156.9 501,156.9 502,156.9 503,157.0 504,156.6 505,156.9 506,157.0 507,156.9 508,156.9 509,156.6 510,156.6 511,156.8 512,156.7 513,157.0 514,156.6 515,156.9 516,156.6 517,156.5 518,156.6 519,156.6 520,156.5 521,156.9 522,156.5 523,156.8 524,156.8 525,156.5 526,156.8 527,156.9 528,156.5 529,156.6 530,156.9 531,156.5 532,156.7 533,156.5 534,156.9 535,156.5 536,156.9 537,156.6 538,156.7 539,157.0 540,156.9 541,156.8 542,157.0 543,156.9 544,157.0 545,156.9 546,156.9 547,156.6 548,156.9 549,157.0 550,156.5 551,156.7 552,156.9 553,156.7 554,156.7 555,156.6 556,156.8 557,156.7 558,156.5 559,156.6 560,156.9 561,156.6 562,157.0 563,156.9 564,157.0 565,156.9 566,156.6 567,156.8 568,156.6 569,157.0 570,156.7 571,156.4 572,156.9 573,156.5 574,156.7 575,156.7 576,156.7 577,156.8 578,156.8 579,156.8 580,156.8 581,156.5 582,156.9 583,156.5 584,156.9 585,156.8 586,156.7 587,156.9 588,156.9 589,156.7 590,156.6 591,157.0 592,156.9 593,156.6 594,156.9 595,156.7 596,156.9 597,156.5 598,156.6 599,156.9 600,156.6 601,156.9 602,156.6 603,156.9 604,156.5 605,156.7 606,156.9 607,156.6 608,156.6 609,156.9 610,156.8 611,156.5 612,156.9 613,156.8 614,157.0 615,156.9 616,156.5 617,156.4 618,156.4 619,156.9 620,156.9 621,156.6 622,157.0 623,156.9 624,156.4 625,156.9 626,156.9 627,156.5 628,156.9 629,156.8 630,157.0 631,156.8 632,156.5 633,156.5 634,156.6 635,156.5 636,157.0 637,156.8 638,157.0 639,156.9 640,156.9 641,156.9 642,156.8 643,157.0 644,156.4 645,156.9 646,156.8 647,156.4 648,156.9 649,156.5 650,156.5 651,156.8 652,157.0 653,156.9 654,156.9 655,156.9 656,156.9 657,156.9 658,156.8 659,156.5 660,157.0 661,156.8 662,156.9 663,156.6 664,156.9 665,156.7 666,156.9 667,156.9 668,156.9 669,156.5 670,157.0 671,156.8 672,156.6 673,156.6 674,156.6 675,156.8 676,156.4 677,156.5 678,156.8 679,156.6 680,156.9 681,156.5 682,156.9 683,157.0 684,157.0 685,156.9 686,156.9 687,156.4 688,156.5 689,156.9 690,156.9 691,156.6 692,156.6 693,156.9 694,156.9 695,156.5 696,156.7 697,156.5 698,156.9 699,156.8 700,156.8 701,156.4 702,156.6 703,156.7 704,157.0 705,156.6 706,156.8 707,156.9 708,157.0 709,156.6 710,156.9 711,156.5 712,156.7 713,156.5 714,156.8 715,156.7 716,156.8 717,156.6 718,156.9 719,157.0 720,156.5 721,156.5 722,156.8 723,157.0 724,156.6 725,156.8 726,156.7 727,156.8 728,156.9 729,157.0 730,156.9 731,156.7 732,156.7 733,156.9 734,156.9 735,156.5 736,156.6 737,156.8 738,156.9 739,156.9 740,157.0 741,156.6 742,156.6 743,156.9 744,156.9 745,156.9 746,156.9 747,156.9 748,156.6 749,156.5 750,156.8 751,156.9 752,156.9 753,156.6 754,156.5 755,156.6 756,156.5 757,156.9 758,156.8 759,156.6 760,157.0 761,156.6 762,156.6 763,156.5 764,156.6 765,156.6 766,156.9 767,156.5 768,156.5 769,156.6 770,157.0 771,156.5 772,156.8 773,156.5 774,156.6 775,156.8 776,156.7 777,157.0 778,157.0 779,156.8 780,157.0 781,156.9 782,156.8 783,156.5 784,156.9 785,156.6 786,156.5 787,156.7 788,156.9 789,156.5 790,156.9 791,157.0 792,156.9 793,156.8 794,156.6 795,156.9 796,156.5 797,156.8 798,156.6 799,156.7 800,156.5 801,156.6 802,156.9 803,156.9 804,157.0 805,157.0 806,156.9 807,156.9 808,156.8 809,156.8 810,157.0 811,156.7 812,156.5 813,156.8 814,156.9 815,157.0 816,156.8 817,156.9 818,156.9 819,156.8 820,156.6 821,156.6 822,157.0 823,157.0 824,156.4 825,156.6 826,156.5 827,156.6 828,156.5 829,157.0 830,156.8 831,156.9 832,156.5 833,156.9 834,157.0 835,156.9 836,156.5 837,156.8 838,157.0 839,156.9 840,156.5 841,156.9 842,156.7 843,156.5 844,156.9 845,156.6 846,157.0 847,157.0 848,156.9 849,156.8 850,156.9 851,157.0 852,156.6 853,156.5 854,156.9 855,156.9 856,156.5 857,156.5 857,158.5 856,158.3 855,158.0 854,158.1 853,158.4 852,158.4 851,158.1 850,158.2 849,158.0 848,158.2 847,158.2 846,158.1 845,158.5 844,158.1 843,158.3 842,158.3 841,158.2 840,158.6 839,158.1 838,158.2 837,158.1 836,158.5 835,158.1 834,158.1 833,158.1 832,158.5 831,158.2 830,158.2 829,158.0 828,158.4 827,158.3 826,158.6 825,158.5 824,158.5 823,158.0 822,158.1 821,158.3 820,158.5 819,158.1 818,158.1 817,158.0 816,158.1 815,158.1 814,158.1 813,158.2 812,158.3 811,158.4 810,158.1 809,158.0 808,158.1 807,158.0 806,158.0 805,158.1 804,158.1 803,158.1 802,158.1 801,158.5 800,158.5 799,158.4 798,158.5 797,158.1 796,158.4 795,158.1 794,158.5 793,158.0 792,158.1 791,158.2 790,158.1 789,158.4 788,158.0 787,158.6 786,158.6 785,158.4 784,158.1 783,158.6 782,158.0 781,158.1 780,158.0 779,158.1 778,158.1 777,158.1 776,158.5 775,158.2 774,158.4 773,158.4 772,158.2 771,158.4 770,158.0 769,158.6 768,158.5 767,158.5 766,158.2 765,158.4 764,158.3 763,158.4 762,158.4 761,158.3 760,158.1 759,158.4 758,158.0 757,158.0 756,158.5 755,158.5 754,158.5 753,158.4 752,158.0 751,158.0 750,158.2 749,158.5 748,158.4 747,158.0 746,158.1 745,158.1 744,158.1 743,158.0 742,158.6 741,158.4 740,158.2 739,158.1 738,158.0 737,158.1 736,158.4 735,158.6 734,158.1 733,158.1 732,158.3 731,158.5 730,158.2 729,158.2 728,158.0 727,158.2 726,158.4 725,158.1 724,158.5 723,158.1 722,158.1 721,158.3 720,158.4 719,158.1 718,158.2 717,158.4 716,158.1 715,158.3 714,158.2 713,158.5 712,158.3 711,158.4 710,158.1 709,158.5 708,158.1 707,158.0 706,158.0 705,158.4 704,158.1 703,158.5 702,158.4 701,158.5 700,158.2 699,158.0 698,158.2 697,158.5 696,158.3 695,158.4 694,158.2 693,158.1 692,158.4 691,158.3 690,158.2 689,158.1 688,158.4 687,158.5 686,158.0 685,158.0 684,158.1 683,158.0 682,158.1 681,158.5 680,158.1 679,158.5 678,158.1 677,158.3 676,158.5 675,158.0 674,158.3 673,158.3 672,158.3 671,158.1 670,158.1 669,158.5 668,158.1 667,158.1 666,158.0 665,158.3 664,158.0 663,158.4 662,158.0 661,158.2 660,158.2 659,158.4 658,158.1 657,158.1 656,158.0 655,158.1 654,158.2 653,158.1 652,158.2 651,158.1 650,158.5 649,158.3 648,158.1 647,158.5 646,158.2 645,158.1 644,158.6 643,158.1 642,158.2 641,158.2 640,158.1 639,158.1 638,158.0 637,158.1 636,158.1 635,158.4 634,158.6 633,158.4 632,158.6 631,158.1 630,158.0 629,158.1 628,158.1 627,158.3 626,158.2 625,158.1 624,158.4 623,158.1 622,158.1 621,158.5 620,158.1 619,158.2 618,158.6 617,158.4 616,158.4 615,158.0 614,158.1 613,158.0 612,158.2 611,158.4 610,158.0 609,158.1 608,158.3 607,158.4 606,158.2 605,158.5 604,158.3 603,158.1 602,158.5 601,158.1 600,158.4 599,158.2 598,158.4 597,158.3 596,158.1 595,158.5 594,158.1 593,158.5 592,158.1 591,158.1 590,158.5 589,158.6 588,158.0 587,158.0 586,158.5 585,158.0 584,158.1 583,158.3 582,158.0 581,158.3 580,158.1 579,158.0 578,158.1 577,158.0 576,158.5 575,158.4 574,158.5 573,158.6 572,158.1 571,158.3 570,158.5 569,158.2 568,158.5 567,158.1 566,158.4 565,158.2 564,158.1 563,158.1 562,158.0 561,158.4 560,158.1 559,158.3 558,158.5 557,158.3 556,158.0 555,158.5 554,158.5 553,158.5 552,158.1 551,158.4 550,158.6 549,158.0 548,158.1 547,158.4 546,158.1 545,158.0 544,158.2 543,158.1 542,158.2 541,158.0 540,158.1 539,158.0 538,158.6 537,158.5 536,158.0 535,158.5 534,158.0 533,158.5 532,158.4 531,158.5 530,158.1 529,158.4 528,158.4 527,158.1 526,158.1 525,158.4 524,158.1 523,158.1 522,158.4 521,158.2 520,158.5 519,158.5 518,158.5 517,158.4 516,158.4 515,158.1 514,158.5 513,158.1 512,158.5 511,158.0 510,158.3 509,158.5 508,158.1 507,158.2 506,158.0 505,158.1 504,158.5 503,158.0 502,158.1 501,158.2 500,158.1 499,158.2 498,158.4 497,158.3 496,158.4 495,158.0 494,158.4 493,158.1 492,158.4 491,158.1 490,158.0 489,158.2 488,158.1 487,158.1 486,158.6 485,158.2 484,158.3 483,158.5 482,158.5 481,158.1 480,158.2 479,158.5 478,158.0 477,158.1 476,158.4 475,158.1 474,158.4 473,158.0 472,158.1 471,158.6 470,158.1 469,158.4 468,158.2 467,158.5 466,158.5 465,158.2 464,158.1 463,158.2 462,158.2 461,158.2 460,158.0 459,158.2 458,158.0 457,158.1 456,158.5 455,158.6 454,158.4 453,158.1 452,158.2 451,158.3 450,158.0 449,158.3 448,158.4 447,158.6 446,158.2 445,158.1 444,158.6 443,158.4 442,158.0 441,158.1 440,158.1 439,158.1 438,158.2 437,158.1 436,158.5 435,158.4 434,158.1 433,158.1 432,158.3 431,158.0 430,158.1 429,158.2 428,158.0 427,158.3 426,158.5 425,158.3 424,158.4 423,158.1 422,158.3 421,158.0 420,158.1 419,158.2 418,158.4 417,158.5 416,158.0 415,158.4 414,158.5 413,158.6 412,158.4 411,158.0 410,158.5 409,158.3 408,158.4 407,158.1 406,158.1 405,158.4 404,158.1 403,158.4 402,158.1 401,158.1 400,158.3 399,158.1 398,158.1 397,158.1 396,158.5 395,158.2 394,158.3 393,158.5 392,158.1 391,158.0 390,158.4 389,158.1 388,158.3 387,158.1 386,158.4 385,158.2 384,158.4 383,158.6 382,158.5 381,158.1 380,158.0 379,158.4 378,158.1 377,158.2 376,158.0 375,158.0 374,158.1 373,158.5 372,158.1 371,158.1 370,158.2 369,158.1 368,158.1 367,158.4 366,158.4 365,158.1 364,158.2 363,158.4 362,158.1" fill="#1a1700" stroke-linejoin="round"/><polygon points="859,118.9 860,118.9 861,119.2 862,119.2 863,119.1 864,119.2 865,119.1 866,119.1 867,119.1 868,119.2 869,119.2 870,119.2 871,119.1 872,119.3 873,119.3 874,118.9 875,118.0 876,118.2 877,118.1 878,118.5 879,118.8 880,118.7 881,118.0 882,117.4 883,118.4 884,118.8 885,119.6 886,119.3 887,118.5 888,118.5 889,118.8 890,118.5 891,118.4 892,118.6 893,118.7 894,118.4 895,118.0 896,117.5 897,117.6 898,118.8 899,119.3 900,118.0 901,118.1 902,117.5 903,117.7 904,118.1 905,119.4 906,118.9 907,119.5 908,120.1 909,119.7 910,119.1 911,119.3 912,119.7 913,119.6 914,118.9 915,117.9 916,116.9 917,117.0 918,118.2 919,120.4 920,120.7 921,119.5 922,117.6 923,117.7 924,117.5 925,116.8 926,116.1 927,116.5 928,118.0 929,118.5 930,119.1 931,118.3 932,117.6 933,117.6 934,117.9 935,118.1 936,116.4 937,116.6 938,117.3 939,117.9 940,117.5 941,117.7 942,117.1 943,117.6 944,117.5 945,118.2 946,119.0 947,119.7 948,119.6 949,118.8 950,116.8 951,116.9 952,117.2 953,117.5 954,118.5 955,118.4 956,117.9 957,116.4 958,115.7 959,117.5 960,119.0 961,118.3 962,118.7 963,119.5 964,119.3 965,118.9 966,119.1 967,120.3 968,120.1 969,120.1 970,119.6 971,117.5 972,119.2 973,120.1 974,119.4 975,116.8 976,118.1 977,118.6 978,119.5 979,119.0 980,118.2 981,117.8 982,117.9 983,118.2 984,118.2 985,119.1 986,119.1 987,118.8 988,117.9 989,118.3 990,118.6 991,118.0 992,118.9 993,119.0 994,118.6 995,118.6 996,117.6 997,117.8 998,118.3 999,117.8 1000,117.8 1001,119.1 1002,119.2 1003,118.1 1004,118.0 1005,118.0 1006,115.8 1007,116.9 1008,119.3 1009,121.1 1010,120.1 1011,119.6 1012,119.3 1013,118.3 1014,118.1 1015,119.7 1016,119.8 1017,119.1 1018,117.9 1019,118.5 1020,119.5 1021,119.5 1022,119.1 1023,119.1 1024,118.1 1025,118.1 1026,118.8 1027,117.6 1028,117.0 1029,116.5 1030,116.0 1031,117.0 1032,118.2 1033,119.2 1034,120.0 1035,119.5 1036,118.7 1037,118.2 1038,118.9 1039,117.7 1040,118.1 1041,118.8 1042,117.6 1043,117.4 1044,118.8 1045,120.1 1046,119.3 1047,118.3 1048,117.0 1049,117.5 1050,118.3 1051,117.8 1052,118.0 1053,117.5 1054,116.0 1055,116.3 1056,117.8 1057,118.6 1058,118.4 1059,116.4 1060,116.2 1061,117.7 1062,118.0 1063,117.7 1064,118.2 1065,119.6 1066,120.7 1067,120.4 1068,117.5 1069,116.0 1070,116.4 1071,118.8 1072,118.0 1073,117.5 1074,117.9 1075,119.9 1076,119.7 1077,118.7 1078,118.4 1079,118.4 1080,118.3 1081,117.8 1082,118.2 1083,118.9 1084,119.4 1085,120.6 1086,119.8 1087,118.0 1088,118.5 1089,118.5 1090,118.7 1091,119.0 1092,118.8 1093,117.1 1094,117.6 1095,116.9 1096,116.0 1097,116.0 1098,117.7 1099,118.5 1100,118.2 1101,119.5 1102,120.2 1103,119.3 1104,117.8 1105,117.2 1106,115.9 1107,116.5 1108,117.7 1109,117.7 1110,118.4 1111,117.8 1112,117.0 1113,116.3 1114,117.1 1115,116.8 1116,117.7 1117,117.6 1118,116.7 1119,117.6 1120,118.2 1121,117.4 1122,116.0 1123,116.8 1124,118.6 1125,119.6 1126,118.4 1127,117.4 1128,118.4 1129,117.7 1130,117.5 1131,117.0 1132,116.7 1133,117.7 1134,118.6 1135,119.2 1136,119.0 1137,119.1 1138,119.0 1139,118.7 1140,119.0 1141,118.9 1142,118.5 1143,118.0 1144,118.7 1145,118.9 1146,118.8 1147,119.4 1148,119.6 1149,119.9 1150,119.6 1151,119.1 1152,118.4 1153,118.1 1154,118.4 1155,118.6 1156,117.9 1157,118.0 1158,118.4 1159,117.9 1160,118.3 1161,118.5 1162,118.7 1163,118.7 1164,118.0 1165,117.6 1166,118.1 1167,117.7 1168,118.2 1169,118.7 1170,118.8 1171,118.6 1172,118.0 1173,118.4 1174,118.7 1175,119.1 1176,119.5 1177,119.3 1178,118.9 1179,119.1 1180,119.7 1181,120.3 1182,119.0 1183,117.8 1184,118.1 1185,119.9 1186,120.4 1187,119.5 1188,119.6 1189,119.9 1190,120.2 1191,120.4 1192,119.6 1193,119.3 1194,119.0 1195,118.8 1196,118.8 1197,118.7 1198,119.1 1199,120.1 1200,119.4 1201,118.7 1202,118.2 1203,118.7 1204,119.1 1205,119.5 1206,118.5 1207,117.9 1208,117.7 1209,118.1 1210,118.5 1211,118.9 1212,118.7 1213,118.1 1214,117.4 1215,119.1 1216,118.7 1217,117.8 1218,118.7 1219,119.3 1220,118.8 1221,118.4 1222,118.3 1223,118.8 1224,118.5 1225,119.1 1226,120.1 1227,119.5 1228,119.3 1229,119.5 1230,119.7 1231,119.4 1232,118.6 1233,118.1 1234,118.4 1234,119.4 1233,119.0 1232,119.9 1231,120.4 1230,120.4 1229,120.0 1228,119.8 1227,120.6 1226,120.8 1225,120.9 1224,120.5 1223,120.0 1222,120.8 1221,120.2 1220,119.9 1219,120.3 1218,119.8 1217,119.9 1216,120.8 1215,120.8 1214,120.4 1213,119.2 1212,119.4 1211,119.4 1210,119.3 1209,119.4 1208,119.0 1207,118.7 1206,119.9 1205,120.5 1204,120.0 1203,119.6 1202,120.0 1201,119.6 1200,120.6 1199,120.6 1198,120.2 1197,119.2 1196,119.3 1195,120.0 1194,120.3 1193,120.2 1192,120.4 1191,120.9 1190,121.1 1189,120.9 1188,120.6 1187,120.7 1186,121.3 1185,120.5 1184,118.9 1183,118.9 1182,120.6 1181,121.0 1180,120.7 1179,119.7 1178,119.7 1177,120.2 1176,120.2 1175,119.6 1174,119.3 1173,119.5 1172,119.6 1171,119.6 1170,120.0 1169,119.7 1168,119.3 1167,119.5 1166,119.8 1165,120.8 1164,121.1 1163,119.8 1162,119.4 1161,120.9 1160,120.7 1159,120.8 1158,120.4 1157,119.8 1156,120.8 1155,121.0 1154,119.6 1153,119.1 1152,119.7 1151,119.9 1150,120.5 1149,120.7 1148,120.4 1147,120.5 1146,120.8 1145,120.3 1144,119.9 1143,120.5 1142,120.7 1141,121.4 1140,120.8 1139,119.4 1138,119.6 1137,120.1 1136,119.9 1135,120.4 1134,120.9 1133,119.5 1132,119.7 1131,119.4 1130,118.4 1129,119.7 1128,119.6 1127,119.3 1126,119.8 1125,120.4 1124,119.5 1123,119.2 1122,120.0 1121,120.6 1120,119.9 1119,119.3 1118,121.1 1117,122.0 1116,121.4 1115,120.3 1114,119.3 1113,119.5 1112,118.9 1111,119.2 1110,119.4 1109,119.9 1108,118.8 1107,118.7 1106,119.6 1105,119.2 1104,119.4 1103,120.2 1102,121.3 1101,122.2 1100,121.6 1099,119.3 1098,119.0 1097,118.5 1096,117.8 1095,119.6 1094,119.7 1093,120.8 1092,121.2 1091,121.0 1090,120.4 1089,120.0 1088,119.4 1087,119.9 1086,120.9 1085,122.2 1084,121.4 1083,120.9 1082,120.8 1081,119.3 1080,119.5 1079,121.0 1078,120.4 1077,119.9 1076,120.6 1075,121.7 1074,122.2 1073,120.3 1072,120.3 1071,119.7 1070,118.4 1069,117.7 1068,119.6 1067,121.1 1066,122.0 1065,120.6 1064,120.2 1063,120.6 1062,122.4 1061,122.1 1060,120.6 1059,120.8 1058,119.5 1057,119.5 1056,119.2 1055,117.6 1054,118.3 1053,119.5 1052,120.2 1051,120.4 1050,119.2 1049,119.8 1048,121.1 1047,121.9 1046,122.5 1045,121.4 1044,120.7 1043,120.6 1042,120.4 1041,119.9 1040,120.1 1039,119.4 1038,119.7 1037,120.8 1036,119.8 1035,120.9 1034,123.6 1033,123.6 1032,119.4 1031,118.5 1030,119.3 1029,119.3 1028,120.5 1027,120.0 1026,119.9 1025,120.8 1024,120.0 1023,120.2 1022,120.5 1021,120.2 1020,120.3 1019,119.7 1018,120.9 1017,121.0 1016,120.8 1015,121.8 1014,121.7 1013,120.3 1012,120.7 1011,120.5 1010,121.6 1009,123.0 1008,122.2 1007,119.5 1006,119.6 1005,119.5 1004,120.0 1003,120.1 1002,120.2 1001,120.2 1000,119.4 999,118.8 998,119.6 997,120.7 996,121.3 995,120.6 994,120.3 993,119.7 992,119.7 991,120.9 990,120.6 989,119.9 988,119.1 987,119.6 986,121.9 985,122.1 984,122.4 983,121.5 982,120.6 981,119.6 980,119.3 979,120.7 978,120.7 977,120.1 976,119.5 975,121.2 974,120.5 973,120.9 972,120.2 971,120.6 970,120.6 969,121.3 968,122.0 967,122.0 966,120.8 965,119.9 964,120.6 963,120.6 962,119.4 961,119.3 960,120.6 959,120.4 958,119.1 957,119.3 956,119.6 955,119.5 954,119.5 953,120.2 952,120.1 951,120.9 950,121.2 949,120.5 948,121.3 947,121.1 946,121.1 945,121.1 944,120.3 943,119.1 942,119.6 941,120.1 940,120.5 939,118.8 938,119.4 937,120.0 936,120.5 935,121.4 934,122.3 933,121.4 932,121.5 931,120.6 930,121.0 929,122.1 928,120.2 927,120.1 926,119.9 925,120.2 924,121.0 923,119.7 922,119.4 921,120.1 920,121.7 919,121.2 918,120.4 917,118.4 916,117.5 915,118.6 914,120.1 913,120.4 912,120.4 911,120.3 910,120.5 909,120.8 908,120.9 907,120.1 906,119.9 905,119.9 904,120.1 903,118.4 902,119.3 901,119.9 900,120.2 899,120.0 898,119.4 897,118.4 896,118.5 895,119.4 894,120.4 893,120.6 892,120.6 891,120.1 890,119.5 889,119.4 888,119.1 887,119.3 886,120.3 885,120.6 884,120.8 883,120.6 882,120.8 881,120.1 880,119.9 879,119.6 878,119.2 877,118.9 876,118.6 875,119.2 874,119.4 873,120.0 872,119.8 871,119.5 870,119.5 869,119.5 868,119.4 867,119.5 866,119.5 865,119.5 864,119.4 863,119.5 862,119.4 861,119.4 860,119.7 859,119.7" fill="#7d6f1e" stroke="#221e00" stroke-width="0.8" stroke-linejoin="round"/><polygon points="859,157.4 860,157.4 861,157.5 862,157.5 863,157.3 864,157.3 865,157.5 866,157.3 867,157.0 868,157.3 869,157.2 870,157.3 871,157.0 872,156.9 873,156.7 874,157.0 875,156.9 876,157.4 877,157.6 878,157.8 879,157.6 880,157.2 881,157.3 882,156.9 883,156.2 884,156.0 885,157.1 886,156.8 887,156.9 888,157.3 889,156.6 890,155.2 891,155.1 892,155.7 893,155.7 894,157.3 895,157.8 896,157.4 897,157.1 898,157.0 899,157.3 900,156.7 901,156.7 902,155.8 903,155.2 904,156.7 905,156.9 906,156.4 907,155.9 908,155.0 909,156.8 910,157.8 911,157.8 912,156.4 913,155.3 914,155.0 915,155.8 916,157.2 917,157.2 918,157.2 919,156.4 920,157.5 921,157.8 922,157.3 923,157.2 924,156.8 925,157.3 926,156.2 927,155.6 928,154.8 929,154.7 930,155.2 931,155.7 932,156.5 933,156.3 934,156.0 935,156.3 936,156.7 937,158.4 938,157.4 939,155.9 940,154.9 941,156.0 942,157.7 943,156.5 944,154.9 945,154.0 946,153.7 947,154.7 948,155.7 949,157.2 950,156.9 951,157.0 952,156.6 953,155.7 954,156.2 955,156.9 956,156.8 957,156.6 958,155.3 959,156.3 960,156.6 961,155.6 962,155.7 963,156.6 964,157.6 965,157.4 966,156.7 967,158.0 968,157.6 969,156.4 970,157.2 971,156.9 972,156.8 973,156.9 974,156.7 975,155.7 976,154.7 977,155.6 978,156.3 979,156.3 980,156.5 981,156.8 982,157.5 983,157.8 984,156.1 985,156.7 986,156.5 987,156.7 988,158.5 989,158.3 990,154.9 991,154.5 992,155.7 993,155.0 994,156.3 995,157.6 996,157.4 997,155.6 998,156.3 999,156.8 1000,157.0 1001,158.1 1002,158.5 1003,156.9 1004,156.0 1005,157.3 1006,158.1 1007,159.5 1008,159.9 1009,158.7 1010,157.5 1011,157.6 1012,156.8 1013,157.7 1014,158.7 1015,158.0 1016,156.1 1017,154.4 1018,155.2 1019,156.2 1020,156.4 1021,156.2 1022,156.5 1023,157.7 1024,157.5 1025,154.2 1026,154.5 1027,155.3 1028,155.3 1029,157.0 1030,157.6 1031,157.6 1032,157.1 1033,156.2 1034,156.7 1035,156.5 1036,156.2 1037,157.1 1038,158.3 1039,159.4 1040,158.2 1041,154.3 1042,153.5 1043,154.2 1044,154.4 1045,155.6 1046,156.8 1047,157.2 1048,157.6 1049,158.3 1050,159.4 1051,159.3 1052,157.6 1053,155.5 1054,154.2 1055,154.9 1056,156.9 1057,157.3 1058,156.3 1059,154.7 1060,155.9 1061,156.4 1062,155.9 1063,155.0 1064,155.6 1065,155.7 1066,155.5 1067,156.6 1068,156.7 1069,157.1 1070,158.8 1071,158.4 1072,157.4 1073,156.9 1074,157.4 1075,158.5 1076,159.2 1077,158.6 1078,157.0 1079,157.0 1080,157.2 1081,156.4 1082,155.9 1083,156.1 1084,157.2 1085,157.6 1086,157.0 1087,156.6 1088,157.3 1089,157.0 1090,156.5 1091,157.9 1092,158.3 1093,156.6 1094,154.2 1095,153.8 1096,155.0 1097,156.7 1098,155.3 1099,154.5 1100,154.7 1101,154.5 1102,155.2 1103,157.8 1104,157.8 1105,156.8 1106,155.3 1107,155.6 1108,155.2 1109,154.8 1110,154.9 1111,157.3 1112,157.8 1113,156.8 1114,157.4 1115,157.6 1116,156.2 1117,156.0 1118,156.8 1119,157.8 1120,156.5 1121,156.5 1122,158.1 1123,157.6 1124,155.7 1125,155.0 1126,155.7 1127,155.6 1128,155.4 1129,155.3 1130,155.5 1131,156.0 1132,156.2 1133,157.4 1134,156.7 1135,155.3 1136,155.9 1137,157.5 1138,157.9 1139,158.0 1140,157.0 1141,154.8 1142,154.8 1143,156.0 1144,157.0 1145,157.8 1146,157.8 1147,157.1 1148,157.2 1149,156.2 1150,155.0 1151,155.5 1152,155.5 1153,155.9 1154,157.8 1155,157.0 1156,157.4 1157,157.5 1158,157.3 1159,156.4 1160,156.6 1161,155.1 1162,155.4 1163,156.1 1164,157.0 1165,156.9 1166,157.5 1167,157.4 1168,156.4 1169,156.1 1170,157.0 1171,157.4 1172,157.0 1173,156.8 1174,157.2 1175,157.0 1176,156.0 1177,156.0 1178,156.5 1179,156.5 1180,156.1 1181,157.9 1182,157.7 1183,157.8 1184,156.2 1185,157.1 1186,156.9 1187,156.8 1188,156.9 1189,157.8 1190,157.7 1191,156.7 1192,155.0 1193,155.6 1194,155.4 1195,156.4 1196,157.0 1197,157.9 1198,157.8 1199,157.0 1200,156.7 1201,156.5 1202,156.0 1203,155.5 1204,156.1 1205,156.7 1206,156.8 1207,157.8 1208,156.6 1209,156.3 1210,157.6 1211,157.3 1212,156.1 1213,156.2 1214,157.0 1215,157.5 1216,156.9 1217,156.2 1218,156.5 1219,157.0 1220,156.8 1221,156.5 1222,156.6 1223,156.4 1224,155.3 1225,155.4 1226,156.9 1227,157.3 1228,157.3 1229,156.6 1230,156.9 1231,156.9 1232,156.6 1233,156.5 1234,157.1 1234,158.5 1233,158.3 1232,158.0 1231,158.4 1230,157.9 1229,157.2 1228,157.9 1227,158.8 1226,157.7 1225,157.0 1224,156.4 1223,157.3 1222,158.7 1221,158.4 1220,157.9 1219,158.1 1218,157.8 1217,157.9 1216,158.8 1215,158.0 1214,157.6 1213,158.4 1212,158.4 1211,158.1 1210,158.6 1209,159.5 1208,159.7 1207,158.5 1206,158.6 1205,158.9 1204,159.3 1203,158.1 1202,157.9 1201,158.1 1200,157.4 1199,158.0 1198,158.6 1197,158.8 1196,158.3 1195,157.8 1194,158.6 1193,158.1 1192,159.4 1191,159.1 1190,159.0 1189,158.4 1188,157.9 1187,158.9 1186,161.2 1185,160.8 1184,160.5 1183,158.6 1182,159.3 1181,158.9 1180,157.9 1179,157.2 1178,157.7 1177,156.9 1176,157.2 1175,158.2 1174,158.7 1173,158.7 1172,159.8 1171,161.0 1170,159.4 1169,157.8 1168,158.2 1167,158.4 1166,159.4 1165,161.0 1164,159.0 1163,157.0 1162,156.9 1161,157.7 1160,157.4 1159,158.6 1158,158.1 1157,158.2 1156,158.2 1155,159.6 1154,158.8 1153,159.1 1152,158.5 1151,157.0 1150,156.7 1149,157.5 1148,158.0 1147,159.0 1146,159.5 1145,158.7 1144,158.2 1143,159.1 1142,159.2 1141,159.2 1140,159.7 1139,159.4 1138,158.9 1137,158.9 1136,158.1 1135,157.7 1134,158.8 1133,158.4 1132,158.2 1131,158.4 1130,158.1 1129,157.8 1128,158.0 1127,157.7 1126,156.5 1125,156.0 1124,156.8 1123,158.9 1122,159.1 1121,157.4 1120,158.0 1119,158.9 1118,159.0 1117,158.2 1116,157.7 1115,158.4 1114,159.2 1113,159.1 1112,159.5 1111,158.3 1110,156.3 1109,155.8 1108,157.1 1107,157.0 1106,157.6 1105,158.7 1104,159.4 1103,158.7 1102,158.3 1101,157.7 1100,159.1 1099,158.9 1098,157.7 1097,157.6 1096,159.3 1095,158.0 1094,157.0 1093,158.0 1092,159.4 1091,159.1 1090,158.2 1089,158.6 1088,158.7 1087,157.7 1086,157.9 1085,159.1 1084,159.7 1083,159.2 1082,157.7 1081,157.8 1080,158.5 1079,158.6 1078,159.6 1077,160.8 1076,161.0 1075,159.7 1074,158.4 1073,158.5 1072,159.7 1071,160.7 1070,160.0 1069,158.8 1068,158.4 1067,159.1 1066,158.2 1065,156.5 1064,156.9 1063,157.0 1062,157.4 1061,157.6 1060,157.1 1059,159.1 1058,159.1 1057,160.0 1056,159.5 1055,157.1 1054,156.2 1053,157.6 1052,160.3 1051,161.9 1050,160.7 1049,160.2 1048,159.6 1047,159.0 1046,158.9 1045,158.4 1044,158.8 1043,158.6 1042,157.9 1041,158.4 1040,159.1 1039,160.3 1038,159.4 1037,157.9 1036,157.3 1035,157.9 1034,158.6 1033,157.8 1032,158.0 1031,161.4 1030,161.0 1029,158.6 1028,159.7 1027,158.6 1026,155.9 1025,156.4 1024,158.6 1023,160.2 1022,159.1 1021,159.6 1020,160.8 1019,160.6 1018,159.6 1017,157.7 1016,157.0 1015,158.9 1014,159.6 1013,159.0 1012,159.2 1011,159.6 1010,159.9 1009,159.9 1008,161.6 1007,163.1 1006,161.7 1005,158.6 1004,158.2 1003,158.4 1002,159.8 1001,160.1 1000,158.2 999,157.9 998,158.2 997,158.4 996,159.0 995,160.0 994,157.2 993,158.1 992,160.1 991,158.9 990,159.3 989,161.4 988,161.1 987,159.5 986,158.7 985,158.6 984,160.5 983,160.6 982,160.1 981,158.7 980,157.9 979,157.7 978,158.1 977,156.6 976,155.9 975,157.1 974,158.0 973,158.2 972,157.7 971,158.0 970,158.4 969,159.9 968,160.7 967,160.3 966,160.5 965,160.3 964,158.5 963,157.4 962,157.1 961,156.7 960,157.9 959,158.3 958,158.2 957,157.6 956,158.5 955,159.1 954,158.4 953,158.2 952,158.9 951,158.2 950,157.7 949,157.8 948,157.9 947,156.3 946,155.6 945,155.4 944,157.1 943,158.5 942,159.1 941,159.3 940,157.9 939,158.7 938,160.1 937,159.4 936,159.5 935,158.7 934,158.2 933,157.5 932,158.0 931,159.4 930,159.6 929,159.1 928,158.7 927,157.6 926,158.6 925,158.8 924,158.4 923,159.1 922,160.0 921,159.1 920,158.5 919,159.6 918,160.1 917,159.6 916,158.2 915,158.5 914,158.9 913,158.5 912,158.8 911,159.7 910,159.1 909,157.5 908,158.2 907,157.8 906,157.9 905,157.9 904,157.3 903,157.8 902,158.7 901,159.4 900,159.5 899,158.4 898,158.2 897,158.1 896,158.9 895,159.0 894,158.1 893,157.9 892,157.5 891,158.1 890,158.3 889,158.3 888,158.1 887,158.0 886,158.3 885,157.7 884,158.1 883,159.2 882,160.2 881,159.9 880,159.6 879,159.5 878,158.8 877,158.2 876,157.8 875,157.9 874,158.6 873,158.9 872,158.3 871,158.3 870,157.9 869,157.9 868,157.9 867,158.2 866,157.9 865,157.7 864,157.9 863,157.9 862,157.7 861,157.7 860,157.8 859,157.8" fill="#7d6f1e" stroke="#221e00" stroke-width="0.8" stroke-linejoin="round"/><text x="864" y="112.5" style="font:bold 12px 'Liberation Sans',sans-serif;letter-spacing:-0.56px" fill="#45422c">GDYN_Punching_Perc_DESIGNED - 10</text><rect x="362" y="181" width="507" height="119" fill="url(#gy)"/><rect x="362" y="299" width="507" height="1" fill="#b8a416"/><rect x="382" y="181" width="1" height="119" fill="#6b5d00" fill-opacity="0.33"/><rect x="401" y="181" width="1" height="119" fill="#6b5d00" fill-opacity="0.33"/><rect x="421" y="181" width="1" height="119" fill="#6b5d00" fill-opacity="0.33"/><rect x="441" y="181" width="1" height="119" fill="#6b5d00" fill-opacity="0.33"/><rect x="461" y="181" width="1" height="119" fill="#6b5d00" fill-opacity="0.33"/><rect x="481" y="181" width="1" height="119" fill="#6b5d00" fill-opacity="0.33"/><rect x="501" y="181" width="1" height="119" fill="#6b5d00" fill-opacity="0.33"/><rect x="520" y="181" width="1" height="119" fill="#6b5d00" fill-opacity="0.33"/><rect x="540" y="181" width="1" height="119" fill="#6b5d00" fill-opacity="0.33"/><rect x="560" y="181" width="1" height="119" fill="#6b5d00" fill-opacity="0.33"/><rect x="580" y="181" width="1" height="119" fill="#6b5d00" fill-opacity="0.33"/><rect x="600" y="181" width="1" height="119" fill="#6b5d00" fill-opacity="0.33"/><rect x="620" y="181" width="1" height="119" fill="#6b5d00" fill-opacity="0.33"/><rect x="640" y="181" width="1" height="119" fill="#6b5d00" fill-opacity="0.33"/><rect x="659" y="181" width="1" height="119" fill="#6b5d00" fill-opacity="0.33"/><rect x="679" y="181" width="1" height="119" fill="#6b5d00" fill-opacity="0.33"/><rect x="699" y="181" width="1" height="119" fill="#6b5d00" fill-opacity="0.33"/><rect x="719" y="181" width="1" height="119" fill="#6b5d00" fill-opacity="0.33"/><rect x="739" y="181" width="1" height="119" fill="#6b5d00" fill-opacity="0.33"/><rect x="759" y="181" width="1" height="119" fill="#6b5d00" fill-opacity="0.33"/><rect x="779" y="181" width="1" height="119" fill="#6b5d00" fill-opacity="0.33"/><rect x="798" y="181" width="1" height="119" fill="#6b5d00" fill-opacity="0.33"/><rect x="818" y="181" width="1" height="119" fill="#6b5d00" fill-opacity="0.33"/><rect x="838" y="181" width="1" height="119" fill="#6b5d00" fill-opacity="0.33"/><rect x="858" y="181" width="1" height="119" fill="#6b5d00" fill-opacity="0.33"/><polygon points="362,211.0 363,210.4 364,210.5 365,210.2 366,210.1 367,210.2 368,210.4 369,210.6 370,210.6 371,210.5 372,210.5 373,210.1 374,210.3 375,210.3 376,210.4 377,210.5 378,210.6 379,210.5 380,210.5 381,210.1 382,210.4 383,210.2 384,210.1 385,210.0 386,209.4 387,209.7 388,208.9 389,207.0 390,207.6 391,209.2 392,209.6 393,209.6 394,208.3 395,208.3 396,209.5 397,209.2 398,209.9 399,209.9 400,209.5 401,209.0 402,210.1 403,209.7 404,209.1 405,209.5 406,210.1 407,209.9 408,209.6 409,210.2 410,210.0 411,210.0 412,209.9 413,210.3 414,210.2 415,210.4 416,210.3 417,210.4 418,210.1 419,210.1 420,210.1 421,210.2 422,210.2 423,210.3 424,210.5 425,210.2 426,210.2 427,210.3 428,210.4 429,210.4 430,210.3 431,210.4 432,210.5 433,210.5 434,210.1 435,210.2 436,209.9 437,209.9 438,209.7 439,210.1 440,210.3 441,210.2 442,210.4 443,209.9 444,210.2 445,210.1 446,210.4 447,210.2 448,210.2 449,210.4 450,210.4 451,210.3 452,210.4 453,210.4 454,210.1 455,210.4 456,210.4 457,210.6 458,210.2 459,210.0 460,210.1 461,210.0 462,210.0 463,209.3 464,210.2 465,209.7 466,208.2 467,207.3 468,209.0 469,208.8 470,206.6 471,206.4 472,208.9 473,207.4 474,209.6 475,209.6 476,209.2 477,208.8 478,208.2 479,207.8 480,208.7 481,209.1 482,208.8 483,208.7 484,208.9 485,208.9 486,209.7 487,209.7 488,209.8 489,209.8 490,210.2 491,209.3 492,210.2 493,209.9 494,209.5 495,210.2 496,210.2 497,210.1 498,210.3 499,209.7 500,210.3 501,210.1 502,209.9 503,209.9 504,210.1 505,210.1 506,210.2 507,210.0 508,210.2 509,210.2 510,210.1 511,210.4 512,210.1 513,210.0 514,210.0 515,210.1 516,210.2 517,210.1 518,210.1 519,210.0 520,209.9 521,210.1 522,210.4 523,210.5 524,210.2 525,210.4 526,210.4 527,210.3 528,210.5 529,210.4 530,210.3 531,210.2 532,210.2 533,210.4 534,210.3 535,210.2 536,210.0 537,210.3 538,210.3 539,210.4 540,210.3 541,210.1 542,210.3 543,210.0 544,209.9 545,209.8 546,208.9 547,209.2 548,208.3 549,209.4 550,209.8 551,209.8 552,209.8 553,209.4 554,209.5 555,209.5 556,210.0 557,210.0 558,210.1 559,210.3 560,210.0 561,210.0 562,209.9 563,210.1 564,210.1 565,210.1 566,210.0 567,210.4 568,210.3 569,210.1 570,210.1 571,210.1 572,209.9 573,209.9 574,210.2 575,210.2 576,210.0 577,210.1 578,210.0 579,210.2 580,210.4 581,210.6 582,210.6 583,210.4 584,210.1 585,210.2 586,210.3 587,210.4 588,210.2 589,210.5 590,210.2 591,210.1 592,210.0 593,209.5 594,210.2 595,209.5 596,209.6 597,209.5 598,210.2 599,209.5 600,210.3 601,210.1 602,210.0 603,209.9 604,210.4 605,210.1 606,210.3 607,210.5 608,210.1 609,210.1 610,210.1 611,210.1 612,210.0 613,210.3 614,210.0 615,209.8 616,210.2 617,210.1 618,210.2 619,210.4 620,210.3 621,210.3 622,210.2 623,210.5 624,210.4 625,210.4 626,210.5 627,210.4 628,210.4 629,210.4 630,210.5 631,210.1 632,210.1 633,210.2 634,210.1 635,210.5 636,210.3 637,210.4 638,210.5 639,210.3 640,210.6 641,210.6 642,210.4 643,210.5 644,210.2 645,210.3 646,210.2 647,210.5 648,210.4 649,210.1 650,210.3 651,210.4 652,210.4 653,210.2 654,210.2 655,210.4 656,210.4 657,210.4 658,210.5 659,210.4 660,210.6 661,210.6 662,210.4 663,210.2 664,210.3 665,210.2 666,210.4 667,210.3 668,210.6 669,210.1 670,210.2 671,210.2 672,209.8 673,208.1 674,209.1 675,205.8 676,207.2 677,208.9 678,209.2 679,207.8 680,209.1 681,208.8 682,208.3 683,206.3 684,208.5 685,209.2 686,206.8 687,205.9 688,207.3 689,209.2 690,207.4 691,208.4 692,207.2 693,207.5 694,208.6 695,207.5 696,207.7 697,208.9 698,209.2 699,209.6 700,209.5 701,207.6 702,209.3 703,209.1 704,208.8 705,209.8 706,208.4 707,208.5 708,207.7 709,209.3 710,208.7 711,209.1 712,209.4 713,210.0 714,209.5 715,209.1 716,209.9 717,209.0 718,209.1 719,208.7 720,209.2 721,209.4 722,208.8 723,209.8 724,209.6 725,210.1 726,210.0 727,210.2 728,209.7 729,209.8 730,209.8 731,210.2 732,210.1 733,210.1 734,209.9 735,209.7 736,209.5 737,209.5 738,210.2 739,209.9 740,210.0 741,209.6 742,210.3 743,210.1 744,209.9 745,210.1 746,210.1 747,209.8 748,209.8 749,210.0 750,210.5 751,210.1 752,210.3 753,209.9 754,210.2 755,210.1 756,210.1 757,209.2 758,210.0 759,209.9 760,210.4 761,209.3 762,209.9 763,209.5 764,210.1 765,209.6 766,209.6 767,210.4 768,210.6 769,210.5 770,210.5 771,210.2 772,210.1 773,210.2 774,210.3 775,210.0 776,210.4 777,210.2 778,210.3 779,209.9 780,210.2 781,210.3 782,210.3 783,209.9 784,210.3 785,210.4 786,210.2 787,210.3 788,210.2 789,210.5 790,210.6 791,210.6 792,210.6 793,210.8 794,210.6 795,210.7 796,210.5 797,210.8 798,210.6 799,210.4 800,210.5 801,210.4 802,210.7 803,210.6 804,210.8 805,210.8 806,210.8 807,210.7 808,210.6 809,210.7 810,210.9 811,210.8 812,210.8 813,210.8 814,210.9 815,210.8 816,210.7 817,210.8 818,210.8 819,210.7 820,210.9 821,211.0 822,211.0 823,210.9 824,210.9 825,210.8 826,210.8 827,210.8 828,210.8 829,210.7 830,211.0 831,211.0 832,210.9 833,211.0 834,211.0 835,210.9 836,211.0 837,210.9 838,211.0 839,211.0 840,211.1 841,211.1 842,211.1 843,211.0 844,211.0 845,211.0 846,211.0 847,211.1 848,210.9 849,210.9 850,211.1 851,211.0 852,211.1 853,211.1 854,211.1 855,211.1 856,211.1 857,211.0 858,211.0 859,211.2 860,211.0 861,211.2 862,211.1 863,211.1 864,211.1 865,210.9 866,211.0 867,210.9 868,211.2 868,212.0 867,212.2 866,212.1 865,212.2 864,212.2 863,212.1 862,212.1 861,212.1 860,212.1 859,212.1 858,212.2 857,212.2 856,212.2 855,212.2 854,212.1 853,212.1 852,212.2 851,212.1 850,212.3 849,212.1 848,212.3 847,212.2 846,212.1 845,212.2 844,212.1 843,212.2 842,212.2 841,212.1 840,212.2 839,212.2 838,212.2 837,212.2 836,212.2 835,212.1 834,212.3 833,212.4 832,212.4 831,212.3 830,212.2 829,212.4 828,212.6 827,212.5 826,212.4 825,212.5 824,212.3 823,212.3 822,212.2 821,212.4 820,212.3 819,212.3 818,212.4 817,212.3 816,212.6 815,212.4 814,212.3 813,212.5 812,212.5 811,212.4 810,212.4 809,212.4 808,212.4 807,212.5 806,212.5 805,212.5 804,212.5 803,212.6 802,212.7 801,212.8 800,212.8 799,212.6 798,212.6 797,212.5 796,212.6 795,212.6 794,212.7 793,212.4 792,212.7 791,212.7 790,212.6 789,212.6 788,212.9 787,212.8 786,213.0 785,212.9 784,212.9 783,213.1 782,213.0 781,212.8 780,213.2 779,212.9 778,213.1 777,213.0 776,212.7 775,213.0 774,212.8 773,213.0 772,213.1 771,212.8 770,212.8 769,212.7 768,212.7 767,212.9 766,213.2 765,213.5 764,213.0 763,213.8 762,213.3 761,213.6 760,212.8 759,213.3 758,213.3 757,214.0 756,213.0 755,212.8 754,212.8 753,213.2 752,213.0 751,213.0 750,212.9 749,213.0 748,213.1 747,213.5 746,213.0 745,212.9 744,213.3 743,213.3 742,213.0 741,213.7 740,213.2 739,213.5 738,213.0 737,213.3 736,213.3 735,213.8 734,213.3 733,213.1 732,213.1 731,213.1 730,213.6 729,213.4 728,213.7 727,213.4 726,213.2 725,213.2 724,213.5 723,213.4 722,214.2 721,213.8 720,213.6 719,214.5 718,213.8 717,214.6 716,213.2 715,213.9 714,213.6 713,213.5 712,213.4 711,214.9 710,214.5 709,213.8 708,215.0 707,214.5 706,214.6 705,213.4 704,214.2 703,214.3 702,213.6 701,215.1 700,213.7 699,213.5 698,214.0 697,214.6 696,215.0 695,214.9 694,215.0 693,214.8 692,215.2 691,214.2 690,216.3 689,214.1 688,216.3 687,217.6 686,216.7 685,214.2 684,214.8 683,217.0 682,214.3 681,214.6 680,214.3 679,215.2 678,214.1 677,214.7 676,215.1 675,217.9 674,213.7 673,214.8 672,213.8 671,213.1 670,212.8 669,212.7 668,212.7 667,212.9 666,212.6 665,212.8 664,213.0 663,212.7 662,212.9 661,212.6 660,212.8 659,212.8 658,212.6 657,212.6 656,212.8 655,212.8 654,212.8 653,212.8 652,212.9 651,213.0 650,213.0 649,213.1 648,212.9 647,212.7 646,213.1 645,213.0 644,212.9 643,212.6 642,212.6 641,212.7 640,212.6 639,212.8 638,212.6 637,212.7 636,212.6 635,212.8 634,212.8 633,213.3 632,213.2 631,212.8 630,212.8 629,212.7 628,212.8 627,212.6 626,212.7 625,212.8 624,212.8 623,212.7 622,212.8 621,212.8 620,212.7 619,212.9 618,212.8 617,213.3 616,213.1 615,213.2 614,213.0 613,212.9 612,213.0 611,213.4 610,212.9 609,213.1 608,213.1 607,212.8 606,212.8 605,212.9 604,212.9 603,213.2 602,213.0 601,213.2 600,213.1 599,213.3 598,213.3 597,213.6 596,213.2 595,213.7 594,213.0 593,213.7 592,213.1 591,213.4 590,213.0 589,212.7 588,213.1 587,213.0 586,212.9 585,212.9 584,213.2 583,212.8 582,212.6 581,212.6 580,213.1 579,213.3 578,213.1 577,213.2 576,213.0 575,213.0 574,212.9 573,213.3 572,213.2 571,213.2 570,213.1 569,213.2 568,213.1 567,213.1 566,212.9 565,213.2 564,213.1 563,213.3 562,213.1 561,213.2 560,212.9 559,213.1 558,213.2 557,213.3 556,213.0 555,213.5 554,213.4 553,213.4 552,213.7 551,213.5 550,213.7 549,213.6 548,214.9 547,213.9 546,213.8 545,213.4 544,213.2 543,213.0 542,212.9 541,212.8 540,212.8 539,213.1 538,212.9 537,213.1 536,212.9 535,212.9 534,212.7 533,212.6 532,212.7 531,212.9 530,212.9 529,212.8 528,212.7 527,212.7 526,213.0 525,213.0 524,212.7 523,212.8 522,213.2 521,213.1 520,213.3 519,213.0 518,213.0 517,213.0 516,213.2 515,213.1 514,213.3 513,213.2 512,212.9 511,213.1 510,213.2 509,213.1 508,212.8 507,213.4 506,212.9 505,213.5 504,212.9 503,213.4 502,213.4 501,212.9 500,212.7 499,213.5 498,213.0 497,213.2 496,213.1 495,213.2 494,213.7 493,213.1 492,213.2 491,213.5 490,213.2 489,213.4 488,213.4 487,213.1 486,213.2 485,214.7 484,214.5 483,214.3 482,214.5 481,214.3 480,214.3 479,215.3 478,214.5 477,214.2 476,214.2 475,213.6 474,214.0 473,215.5 472,213.8 471,216.6 470,215.9 469,214.2 468,214.2 467,216.0 466,215.1 465,213.6 464,213.2 463,213.9 462,213.7 461,212.9 460,213.3 459,213.4 458,212.8 457,212.8 456,212.8 455,213.0 454,212.8 453,212.6 452,212.9 451,212.8 450,212.7 449,212.8 448,212.8 447,213.0 446,212.9 445,213.1 444,213.0 443,213.3 442,213.0 441,212.7 440,213.1 439,213.3 438,213.4 437,213.3 436,213.0 435,212.9 434,213.1 433,212.8 432,212.8 431,213.0 430,212.9 429,212.9 428,212.9 427,212.9 426,212.8 425,213.0 424,212.9 423,212.8 422,213.0 421,212.9 420,213.3 419,212.9 418,213.0 417,212.8 416,212.8 415,213.1 414,212.9 413,213.1 412,213.1 411,213.1 410,213.6 409,213.2 408,213.5 407,213.2 406,213.1 405,214.0 404,214.1 403,213.7 402,213.3 401,214.3 400,213.5 399,213.4 398,213.3 397,213.9 396,213.3 395,214.8 394,214.4 393,214.2 392,213.8 391,213.9 390,215.9 389,216.3 388,214.0 387,213.5 386,213.7 385,213.2 384,213.0 383,213.1 382,213.0 381,212.9 380,212.7 379,212.6 378,212.7 377,212.8 376,212.8 375,212.8 374,213.1 373,212.9 372,213.0 371,212.7 370,212.8 369,212.8 368,212.9 367,213.0 366,212.8 365,213.0 364,213.0 363,212.8 362,212.2" fill="#8a7b2c" stroke="#2a2400" stroke-width="0.9" stroke-linejoin="round"/><polygon points="362,267.2 363,267.1 364,266.3 365,266.2 366,266.6 367,266.1 368,266.6 369,266.9 370,266.4 371,266.6 372,266.4 373,266.6 374,265.9 375,266.1 376,266.5 377,266.8 378,266.6 379,266.5 380,266.8 381,266.9 382,266.3 383,265.9 384,266.6 385,266.0 386,265.0 387,265.2 388,264.2 389,261.2 390,261.3 391,264.6 392,265.8 393,264.8 394,263.9 395,264.6 396,265.4 397,265.5 398,266.4 399,265.1 400,265.9 401,264.9 402,266.5 403,265.5 404,264.6 405,265.5 406,266.6 407,265.6 408,265.1 409,266.5 410,265.2 411,265.7 412,266.3 413,266.1 414,266.7 415,266.0 416,265.9 417,266.8 418,265.9 419,266.1 420,266.3 421,266.1 422,266.0 423,266.9 424,266.7 425,266.7 426,266.2 427,266.7 428,266.4 429,266.7 430,267.0 431,266.3 432,266.7 433,266.6 434,266.4 435,266.0 436,266.3 437,266.5 438,265.8 439,266.3 440,266.2 441,266.8 442,266.6 443,266.2 444,265.8 445,266.5 446,266.6 447,266.1 448,266.6 449,266.6 450,266.8 451,266.3 452,266.5 453,266.3 454,266.7 455,266.9 456,266.7 457,266.5 458,266.1 459,266.3 460,266.3 461,266.2 462,265.2 463,265.2 464,266.3 465,265.2 466,263.3 467,261.6 468,264.0 469,264.0 470,262.0 471,262.4 472,264.6 473,262.4 474,265.1 475,265.9 476,264.2 477,265.2 478,263.4 479,263.4 480,264.7 481,264.9 482,264.4 483,264.0 484,264.7 485,263.5 486,265.8 487,265.7 488,265.5 489,266.3 490,266.1 491,265.3 492,265.8 493,265.6 494,264.8 495,265.9 496,266.4 497,266.4 498,265.8 499,265.4 500,266.2 501,266.1 502,266.4 503,265.5 504,266.1 505,265.9 506,266.5 507,266.2 508,266.5 509,266.4 510,266.4 511,266.8 512,266.0 513,266.1 514,266.2 515,265.4 516,266.6 517,266.4 518,266.2 519,266.6 520,266.4 521,265.9 522,266.5 523,266.2 524,266.8 525,266.8 526,266.7 527,266.3 528,266.9 529,266.6 530,266.7 531,266.7 532,266.7 533,266.8 534,266.9 535,266.2 536,265.9 537,266.5 538,266.4 539,266.2 540,266.1 541,266.4 542,265.9 543,266.2 544,265.9 545,265.6 546,265.2 547,265.5 548,264.1 549,264.9 550,265.5 551,265.1 552,265.2 553,265.4 554,265.9 555,266.0 556,265.9 557,265.7 558,266.2 559,266.6 560,266.1 561,265.7 562,265.4 563,266.6 564,266.5 565,266.4 566,265.9 567,266.9 568,266.0 569,265.6 570,266.3 571,266.2 572,266.2 573,265.8 574,266.6 575,265.8 576,266.6 577,265.9 578,266.2 579,265.6 580,266.3 581,266.7 582,266.7 583,266.8 584,266.5 585,266.6 586,266.7 587,266.7 588,266.0 589,266.6 590,266.3 591,265.9 592,266.4 593,265.8 594,265.5 595,266.0 596,265.8 597,265.4 598,265.8 599,265.5 600,266.0 601,266.2 602,266.6 603,266.6 604,267.0 605,266.7 606,266.3 607,266.3 608,266.4 609,266.6 610,266.8 611,265.8 612,266.2 613,266.7 614,265.6 615,266.2 616,266.2 617,266.2 618,266.4 619,267.1 620,266.9 621,266.2 622,266.3 623,266.0 624,267.1 625,266.7 626,267.0 627,266.7 628,266.5 629,267.0 630,266.1 631,266.2 632,266.6 633,266.6 634,266.2 635,266.3 636,266.8 637,266.5 638,266.9 639,266.5 640,266.6 641,266.5 642,267.1 643,266.8 644,266.2 645,266.4 646,265.9 647,266.3 648,266.6 649,266.1 650,265.9 651,267.0 652,266.5 653,266.7 654,266.8 655,266.7 656,266.7 657,266.9 658,266.6 659,267.1 660,266.9 661,267.0 662,266.8 663,266.9 664,266.2 665,266.3 666,266.7 667,266.5 668,267.0 669,266.0 670,266.1 671,266.9 672,265.9 673,262.7 674,265.3 675,258.1 676,262.7 677,264.8 678,263.6 679,262.9 680,263.7 681,264.4 682,264.5 683,261.2 684,263.4 685,264.5 686,261.5 687,260.1 688,262.4 689,265.0 690,262.1 691,264.7 692,262.9 693,263.4 694,263.6 695,263.3 696,264.0 697,264.6 698,265.3 699,265.0 700,265.6 701,262.8 702,265.9 703,263.6 704,264.1 705,266.1 706,264.4 707,265.2 708,264.0 709,264.9 710,264.7 711,264.9 712,265.7 713,265.3 714,265.7 715,265.4 716,265.9 717,264.4 718,265.2 719,264.6 720,264.8 721,264.9 722,265.0 723,265.2 724,264.9 725,265.6 726,266.1 727,266.4 728,265.3 729,264.9 730,266.0 731,266.5 732,265.8 733,266.6 734,266.3 735,265.2 736,265.8 737,265.4 738,266.7 739,265.2 740,266.4 741,265.6 742,265.9 743,265.7 744,266.7 745,266.1 746,265.8 747,266.2 748,265.3 749,266.4 750,266.8 751,266.2 752,267.0 753,266.1 754,266.4 755,266.4 756,266.0 757,265.7 758,265.9 759,266.5 760,266.6 761,266.0 762,266.7 763,265.3 764,266.1 765,265.8 766,266.1 767,266.9 768,266.6 769,267.0 770,266.6 771,266.5 772,266.1 773,266.9 774,266.7 775,266.6 776,266.8 777,266.7 778,266.7 779,266.5 780,266.5 781,266.3 782,266.3 783,266.5 784,266.9 785,267.1 786,266.4 787,267.3 788,266.6 789,266.9 790,267.0 791,266.9 792,266.8 793,267.5 794,267.3 795,267.4 796,267.5 797,267.5 798,267.2 799,267.1 800,267.3 801,266.8 802,267.4 803,267.2 804,267.6 805,267.6 806,267.7 807,267.2 808,267.3 809,267.8 810,267.6 811,267.7 812,267.5 813,267.7 814,267.8 815,267.5 816,267.5 817,267.8 818,267.8 819,267.9 820,267.7 821,268.0 822,267.7 823,267.6 824,268.0 825,267.6 826,267.6 827,267.2 828,267.5 829,267.6 830,267.8 831,268.0 832,267.7 833,268.1 834,267.7 835,268.1 836,267.9 837,268.1 838,268.0 839,267.9 840,268.3 841,268.2 842,268.0 843,268.3 844,268.0 845,268.2 846,268.3 847,268.0 848,268.1 849,268.2 850,268.1 851,268.0 852,268.3 853,268.2 854,268.2 855,268.2 856,268.1 857,268.4 858,268.3 859,268.1 860,268.4 861,268.3 862,268.3 863,268.2 864,268.5 865,268.2 866,268.3 867,268.3 868,268.4 868,270.6 867,271.0 866,271.1 865,271.1 864,270.8 863,270.8 862,270.8 861,270.9 860,270.8 859,270.8 858,271.1 857,271.2 856,270.9 855,270.8 854,271.0 853,270.8 852,271.1 851,271.1 850,271.0 849,271.0 848,271.2 847,271.1 846,271.2 845,270.9 844,270.9 843,271.1 842,271.2 841,271.2 840,270.8 839,271.2 838,271.1 837,271.2 836,271.2 835,271.0 834,271.3 833,271.5 832,271.2 831,271.4 830,271.5 829,271.6 828,271.4 827,271.5 826,272.0 825,271.3 824,271.3 823,271.2 822,271.5 821,271.5 820,271.4 819,271.5 818,271.3 817,271.5 816,271.6 815,271.4 814,271.8 813,271.3 812,271.9 811,271.7 810,271.7 809,271.5 808,272.0 807,271.5 806,271.4 805,271.4 804,271.6 803,271.9 802,271.7 801,271.9 800,272.2 799,272.3 798,271.6 797,271.9 796,271.8 795,272.0 794,272.2 793,271.6 792,272.2 791,272.4 790,272.0 789,272.2 788,272.8 787,272.4 786,272.1 785,272.4 784,272.2 783,273.1 782,272.5 781,272.3 780,272.4 779,272.8 778,272.5 777,272.4 776,272.5 775,272.7 774,272.7 773,272.5 772,272.8 771,272.3 770,272.8 769,272.7 768,272.0 767,272.2 766,273.7 765,273.1 764,273.5 763,273.9 762,272.5 761,273.4 760,272.8 759,273.3 758,273.0 757,274.0 756,273.1 755,272.6 754,272.4 753,273.1 752,272.5 751,272.9 750,272.9 749,272.7 748,273.5 747,274.0 746,272.7 745,272.8 744,273.0 743,273.5 742,272.7 741,273.7 740,273.6 739,274.0 738,272.8 737,273.9 736,273.3 735,273.1 734,273.6 733,273.3 732,272.6 731,273.6 730,273.9 729,273.2 728,274.0 727,273.1 726,273.4 725,272.7 724,274.1 723,273.7 722,274.7 721,274.1 720,274.0 719,275.3 718,273.6 717,274.1 716,273.8 715,274.1 714,273.9 713,273.5 712,273.9 711,274.7 710,274.5 709,273.7 708,275.4 707,275.0 706,274.8 705,273.9 704,274.9 703,275.8 702,273.3 701,275.7 700,274.0 699,273.7 698,274.3 697,275.2 696,275.6 695,276.7 694,276.6 693,276.4 692,277.1 691,274.8 690,277.8 689,274.8 688,276.3 687,277.6 686,277.4 685,275.2 684,276.0 683,279.4 682,275.1 681,275.1 680,274.2 679,276.8 678,274.3 677,275.0 676,277.1 675,279.0 674,273.9 673,274.9 672,273.8 671,273.2 670,272.5 669,272.2 668,272.8 667,272.6 666,272.2 665,272.9 664,272.7 663,273.0 662,272.1 661,272.4 660,272.5 659,272.9 658,272.3 657,272.2 656,272.2 655,273.2 654,273.1 653,272.8 652,272.8 651,272.5 650,273.4 649,272.5 648,273.1 647,272.1 646,273.3 645,272.6 644,272.6 643,272.1 642,272.5 641,272.5 640,272.5 639,272.3 638,272.8 637,272.9 636,272.1 635,273.2 634,273.2 633,273.4 632,272.8 631,272.7 630,272.3 629,272.4 628,272.6 627,272.5 626,272.8 625,272.9 624,272.4 623,272.3 622,272.4 621,272.3 620,272.1 619,272.8 618,272.5 617,273.3 616,273.1 615,272.7 614,273.1 613,273.2 612,273.6 611,273.3 610,272.5 609,272.4 608,272.6 607,272.9 606,272.8 605,273.2 604,272.5 603,272.7 602,273.4 601,272.9 600,272.5 599,273.8 598,273.3 597,273.5 596,273.7 595,273.5 594,272.8 593,273.2 592,273.8 591,273.4 590,272.5 589,272.8 588,272.5 587,272.9 586,272.8 585,272.9 584,272.7 583,272.4 582,272.5 581,272.6 580,272.7 579,273.3 578,273.1 577,273.3 576,272.8 575,272.9 574,273.2 573,273.4 572,273.2 571,273.4 570,273.1 569,273.1 568,272.7 567,272.3 566,272.9 565,272.7 564,272.5 563,273.3 562,273.7 561,273.5 560,273.3 559,273.2 558,272.7 557,273.1 556,272.6 555,273.6 554,273.6 553,273.6 552,274.5 551,273.4 550,273.4 549,273.2 548,274.5 547,274.2 546,274.5 545,273.7 544,273.7 543,272.9 542,272.6 541,272.8 540,272.7 539,273.2 538,272.4 537,273.4 536,273.2 535,273.0 534,272.3 533,272.5 532,272.2 531,272.2 530,272.6 529,272.4 528,272.7 527,272.7 526,273.1 525,272.9 524,272.3 523,272.9 522,272.5 521,273.5 520,273.5 519,273.0 518,273.0 517,272.4 516,273.2 515,273.3 514,273.2 513,273.5 512,273.0 511,273.2 510,273.2 509,273.1 508,272.7 507,272.7 506,272.7 505,273.2 504,272.9 503,273.3 502,272.8 501,272.6 500,272.6 499,273.9 498,273.1 497,272.9 496,272.8 495,273.2 494,273.3 493,273.9 492,273.0 491,274.5 490,273.0 489,273.0 488,272.9 487,273.9 486,273.8 485,275.5 484,274.2 483,274.9 482,274.6 481,274.3 480,274.6 479,276.1 478,275.3 477,274.5 476,274.9 475,273.6 474,274.5 473,277.1 472,274.0 471,278.7 470,277.9 469,275.0 468,274.1 467,277.6 466,275.1 465,273.7 464,273.1 463,273.2 462,273.2 461,273.5 460,273.0 459,273.2 458,273.3 457,272.1 456,272.8 455,272.4 454,273.2 453,272.2 452,272.9 451,272.2 450,272.6 449,272.9 448,273.1 447,272.5 446,272.9 445,272.8 444,272.6 443,273.3 442,272.5 441,272.5 440,272.8 439,272.9 438,273.9 437,272.8 436,273.0 435,272.5 434,272.9 433,272.9 432,272.4 431,273.1 430,272.9 429,272.9 428,272.9 427,272.4 426,272.3 425,272.4 424,272.8 423,273.1 422,273.2 421,273.3 420,273.5 419,273.1 418,273.1 417,272.8 416,272.7 415,272.6 414,272.8 413,272.9 412,273.6 411,273.3 410,273.4 409,273.4 408,273.6 407,273.3 406,273.1 405,273.6 404,273.4 403,274.2 402,273.0 401,275.1 400,273.2 399,273.7 398,273.4 397,273.7 396,273.8 395,275.4 394,276.0 393,274.3 392,274.6 391,273.8 390,277.5 389,278.4 388,273.7 387,273.3 386,273.2 385,273.8 384,273.6 383,273.0 382,272.9 381,272.8 380,272.5 379,272.6 378,272.7 377,272.1 376,273.0 375,273.0 374,272.9 373,273.0 372,272.7 371,272.4 370,272.2 369,272.6 368,272.7 367,272.6 366,273.0 365,272.5 364,272.4 363,272.7 362,271.7" fill="#6e5f14" stroke="#241f00" stroke-width="0.9" stroke-linejoin="round"/><rect x="858.75" y="325.75" width="378" height="117" fill="url(#gd)" stroke="#bcab52" stroke-width="1.5"/><rect x="878" y="327" width="1" height="115" fill="#b5a545" fill-opacity="0.22"/><rect x="898" y="327" width="1" height="115" fill="#b5a545" fill-opacity="0.22"/><rect x="917" y="327" width="1" height="115" fill="#b5a545" fill-opacity="0.22"/><rect x="937" y="327" width="1" height="115" fill="#b5a545" fill-opacity="0.22"/><rect x="957" y="327" width="1" height="115" fill="#b5a545" fill-opacity="0.22"/><rect x="977" y="327" width="1" height="115" fill="#b5a545" fill-opacity="0.22"/><rect x="997" y="327" width="1" height="115" fill="#b5a545" fill-opacity="0.22"/><rect x="1017" y="327" width="1" height="115" fill="#b5a545" fill-opacity="0.22"/><rect x="1037" y="327" width="1" height="115" fill="#b5a545" fill-opacity="0.22"/><rect x="1056" y="327" width="1" height="115" fill="#b5a545" fill-opacity="0.22"/><rect x="1076" y="327" width="1" height="115" fill="#b5a545" fill-opacity="0.22"/><rect x="1096" y="327" width="1" height="115" fill="#b5a545" fill-opacity="0.22"/><rect x="1116" y="327" width="1" height="115" fill="#b5a545" fill-opacity="0.22"/><rect x="1136" y="327" width="1" height="115" fill="#b5a545" fill-opacity="0.22"/><rect x="1156" y="327" width="1" height="115" fill="#b5a545" fill-opacity="0.22"/><rect x="1176" y="327" width="1" height="115" fill="#b5a545" fill-opacity="0.22"/><rect x="1195" y="327" width="1" height="115" fill="#b5a545" fill-opacity="0.22"/><rect x="1215" y="327" width="1" height="115" fill="#b5a545" fill-opacity="0.22"/><line x1="860.5" y1="330" x2="860.5" y2="440" stroke="#d8c53a" stroke-width="1" stroke-dasharray="1 1.6"/><line x1="947.5" y1="330" x2="947.5" y2="440" stroke="#d8c53a" stroke-width="1" stroke-dasharray="1 1.6"/><line x1="1188.5" y1="330" x2="1188.5" y2="440" stroke="#d8c53a" stroke-width="1" stroke-dasharray="1 1.6"/><polygon points="860,355.1 861,355.0 862,355.2 863,355.1 864,355.2 865,355.1 866,355.1 867,355.4 868,352.1 869,351.2 870,352.1 871,349.8 872,350.1 873,351.8 874,350.2 875,350.6 876,350.1 877,350.7 878,350.9 879,351.0 880,351.5 881,351.9 882,351.2 883,351.8 884,350.3 885,350.5 886,350.7 887,352.1 888,351.9 889,351.6 890,352.2 891,351.2 892,350.5 893,352.6 894,352.6 895,351.5 896,351.5 897,351.8 898,352.6 899,352.3 900,351.8 901,351.9 902,351.8 903,352.4 904,352.3 905,352.4 906,351.9 907,351.8 908,351.3 909,353.0 910,351.8 911,351.9 912,353.0 913,353.3 914,353.4 915,352.9 916,352.0 917,353.4 918,353.1 919,353.0 920,352.9 921,352.3 922,352.0 923,353.1 924,351.8 925,353.5 926,353.0 927,353.4 928,352.9 929,353.1 930,352.7 931,353.0 932,353.3 933,353.3 934,353.7 935,352.5 936,353.7 937,353.5 938,352.8 939,352.9 940,353.1 941,353.4 942,353.6 943,352.6 944,353.7 945,353.6 946,353.2 947,353.3 948,353.7 949,353.7 950,353.8 951,353.5 952,354.0 953,353.7 954,353.6 955,354.0 956,353.5 957,354.2 958,353.3 959,353.5 960,354.4 961,354.3 962,353.7 963,354.0 964,354.5 965,354.3 966,354.3 967,354.2 968,354.3 969,354.1 970,354.4 971,354.2 972,354.4 973,354.2 974,354.6 975,354.3 976,354.6 977,354.8 978,354.6 979,354.7 980,355.1 981,354.8 982,354.6 983,355.1 984,355.1 985,355.0 986,355.1 987,355.0 988,354.9 989,354.8 990,355.2 991,355.2 992,355.0 993,355.2 994,355.3 995,355.1 996,355.2 997,355.1 998,355.1 999,355.3 1000,355.3 1001,355.0 1002,355.4 1003,355.1 1004,355.3 1005,355.4 1006,355.3 1007,355.2 1008,355.4 1009,355.1 1010,355.2 1011,355.2 1012,355.3 1013,355.3 1014,355.1 1015,355.4 1016,355.3 1017,355.2 1018,355.2 1019,355.3 1020,355.2 1021,355.3 1022,355.0 1023,355.4 1024,355.3 1025,355.2 1026,355.2 1027,355.3 1028,355.3 1029,355.4 1030,355.2 1031,355.3 1032,355.3 1033,355.4 1034,355.3 1035,355.3 1036,355.2 1037,355.0 1038,355.3 1039,355.4 1040,355.3 1041,355.5 1042,355.2 1043,355.3 1044,355.1 1045,355.2 1046,355.3 1047,355.4 1048,355.1 1049,355.1 1050,355.1 1051,355.3 1052,355.1 1053,355.1 1054,355.2 1055,355.4 1056,355.2 1057,355.2 1058,355.4 1059,355.3 1060,355.1 1061,355.3 1062,355.4 1063,355.3 1064,355.3 1065,355.1 1066,355.3 1067,355.2 1068,355.4 1069,355.3 1070,355.2 1071,355.4 1072,355.3 1073,355.2 1074,355.4 1075,355.4 1076,355.3 1077,355.2 1078,355.3 1079,355.1 1080,355.3 1081,355.4 1082,355.4 1083,355.3 1084,355.1 1085,355.4 1086,355.4 1087,355.3 1088,355.2 1089,355.1 1090,355.4 1091,355.2 1092,355.1 1093,355.3 1094,355.2 1095,355.0 1096,355.3 1097,355.4 1098,355.5 1099,355.3 1100,355.4 1101,355.3 1102,355.3 1103,355.4 1104,355.2 1105,355.3 1106,355.1 1107,355.3 1108,355.2 1109,355.3 1110,355.3 1111,355.3 1112,355.4 1113,355.3 1114,355.3 1115,355.2 1116,355.3 1117,355.3 1118,355.4 1119,355.2 1120,355.2 1121,355.4 1122,355.2 1123,355.4 1124,355.1 1125,355.3 1126,355.1 1127,355.2 1128,355.2 1129,355.3 1130,355.4 1131,355.3 1132,355.2 1133,355.5 1134,355.4 1135,355.1 1136,355.1 1137,355.2 1138,355.4 1139,355.3 1140,355.2 1141,355.1 1142,355.4 1143,355.3 1144,355.4 1145,355.3 1146,355.3 1147,355.2 1148,355.3 1149,355.3 1150,355.1 1151,355.3 1152,355.3 1153,355.1 1154,355.3 1155,355.2 1156,355.2 1157,355.2 1158,355.3 1159,355.1 1160,355.2 1161,355.1 1162,355.3 1163,355.0 1164,355.3 1165,355.2 1166,355.2 1167,355.3 1168,355.3 1169,355.2 1170,355.3 1171,355.3 1172,355.3 1173,355.2 1174,355.1 1175,355.4 1176,355.2 1177,355.3 1178,355.1 1179,355.1 1180,355.3 1181,355.2 1182,355.1 1183,355.1 1184,355.3 1185,355.1 1186,355.2 1187,355.2 1188,355.3 1189,354.7 1190,353.6 1191,351.7 1192,351.1 1193,350.0 1194,350.5 1195,350.6 1196,352.2 1197,351.8 1198,351.6 1199,351.3 1200,351.7 1201,350.1 1202,351.1 1203,352.4 1204,352.4 1205,352.3 1206,351.9 1207,350.5 1208,350.8 1209,351.5 1210,352.0 1211,350.9 1212,351.7 1213,352.0 1214,351.4 1215,351.8 1216,350.7 1217,352.2 1218,351.4 1219,352.2 1220,352.5 1221,351.1 1222,351.4 1223,352.5 1224,352.9 1225,352.5 1226,351.6 1227,351.7 1228,352.7 1229,353.2 1230,351.7 1231,352.8 1232,353.3 1233,352.1 1234,352.4 1234,359.7 1233,359.6 1232,359.0 1231,358.8 1230,359.9 1229,359.0 1228,359.3 1227,360.3 1226,360.0 1225,359.4 1224,359.2 1223,359.8 1222,361.1 1221,360.5 1220,359.1 1219,360.6 1218,359.6 1217,360.4 1216,360.8 1215,359.6 1214,361.2 1213,359.4 1212,360.2 1211,360.4 1210,361.3 1209,360.7 1208,360.7 1207,361.9 1206,361.0 1205,360.0 1204,360.3 1203,359.6 1202,362.0 1201,360.9 1200,360.5 1199,359.7 1198,360.6 1197,359.8 1196,360.2 1195,360.9 1194,361.0 1193,360.8 1192,360.7 1191,360.5 1190,358.1 1189,357.3 1188,356.7 1187,356.9 1186,356.8 1185,356.8 1184,356.7 1183,356.7 1182,356.8 1181,356.8 1180,356.8 1179,356.7 1178,356.9 1177,356.7 1176,356.7 1175,356.8 1174,356.9 1173,356.7 1172,356.6 1171,356.7 1170,356.7 1169,356.8 1168,356.7 1167,356.8 1166,356.9 1165,356.8 1164,356.8 1163,356.7 1162,356.7 1161,357.0 1160,356.7 1159,357.0 1158,356.9 1157,356.8 1156,356.8 1155,356.7 1154,356.6 1153,356.8 1152,356.8 1151,356.9 1150,356.8 1149,356.7 1148,356.8 1147,356.7 1146,356.7 1145,356.8 1144,356.5 1143,356.8 1142,356.6 1141,356.7 1140,356.8 1139,356.9 1138,356.8 1137,356.9 1136,356.7 1135,357.0 1134,356.8 1133,356.6 1132,356.7 1131,356.7 1130,356.7 1129,356.8 1128,356.8 1127,356.7 1126,356.8 1125,356.7 1124,356.9 1123,356.7 1122,356.7 1121,356.6 1120,356.7 1119,356.8 1118,356.7 1117,356.6 1116,356.8 1115,356.8 1114,356.6 1113,356.8 1112,356.6 1111,356.7 1110,356.9 1109,356.6 1108,356.8 1107,356.6 1106,356.8 1105,356.7 1104,357.0 1103,356.8 1102,356.8 1101,356.7 1100,356.6 1099,356.6 1098,356.6 1097,356.6 1096,356.6 1095,356.9 1094,356.8 1093,356.7 1092,356.8 1091,356.9 1090,356.6 1089,356.7 1088,357.0 1087,356.7 1086,356.8 1085,356.7 1084,357.0 1083,356.7 1082,356.7 1081,356.7 1080,356.6 1079,356.8 1078,356.8 1077,356.7 1076,356.7 1075,356.6 1074,356.6 1073,356.9 1072,356.7 1071,356.6 1070,356.9 1069,357.0 1068,356.6 1067,356.7 1066,356.7 1065,356.8 1064,356.7 1063,356.8 1062,356.7 1061,356.5 1060,356.8 1059,356.7 1058,356.6 1057,356.9 1056,356.7 1055,356.6 1054,356.9 1053,356.8 1052,356.7 1051,356.8 1050,356.7 1049,356.8 1048,356.8 1047,356.7 1046,356.7 1045,356.7 1044,356.9 1043,356.6 1042,356.7 1041,356.5 1040,356.8 1039,356.6 1038,356.8 1037,356.8 1036,356.9 1035,356.8 1034,356.7 1033,356.7 1032,356.7 1031,356.8 1030,356.7 1029,356.6 1028,356.8 1027,356.6 1026,356.9 1025,356.8 1024,356.6 1023,356.6 1022,356.9 1021,356.8 1020,356.9 1019,356.6 1018,356.9 1017,356.6 1016,356.7 1015,356.6 1014,356.9 1013,356.8 1012,356.7 1011,356.7 1010,356.8 1009,356.8 1008,356.6 1007,356.9 1006,356.6 1005,356.8 1004,356.7 1003,356.8 1002,356.7 1001,356.8 1000,356.6 999,356.8 998,356.8 997,356.7 996,356.9 995,356.9 994,356.7 993,356.8 992,356.9 991,356.8 990,356.8 989,357.0 988,357.1 987,357.0 986,357.2 985,357.3 984,356.9 983,357.1 982,357.4 981,357.3 980,357.1 979,357.2 978,357.3 977,357.2 976,357.1 975,357.4 974,357.6 973,357.8 972,357.7 971,357.9 970,357.7 969,357.9 968,357.5 967,357.8 966,357.8 965,357.7 964,357.4 963,357.9 962,358.0 961,357.7 960,357.7 959,358.0 958,358.1 957,357.8 956,358.0 955,357.9 954,358.5 953,358.6 952,357.9 951,358.1 950,358.6 949,358.0 948,358.2 947,358.3 946,358.7 945,358.4 944,358.5 943,359.6 942,358.4 941,358.6 940,359.4 939,358.6 938,359.1 937,358.5 936,359.0 935,359.5 934,358.6 933,358.3 932,358.7 931,358.7 930,358.7 929,358.8 928,359.0 927,358.9 926,358.7 925,358.3 924,359.2 923,358.6 922,359.7 921,359.5 920,359.2 919,358.7 918,359.1 917,358.8 916,359.5 915,358.8 914,358.5 913,358.7 912,359.5 911,359.4 910,359.7 909,358.7 908,360.2 907,360.1 906,360.2 905,358.8 904,359.7 903,359.8 902,360.2 901,359.5 900,359.8 899,360.3 898,359.5 897,360.7 896,360.4 895,360.2 894,359.2 893,359.5 892,360.3 891,361.3 890,360.9 889,361.3 888,359.9 887,359.4 886,361.0 885,361.4 884,361.2 883,360.7 882,360.9 881,360.8 880,360.5 879,360.7 878,360.0 877,360.3 876,360.9 875,360.1 874,361.2 873,360.1 872,360.9 871,362.0 870,360.7 869,361.1 868,359.6 867,356.6 866,356.8 865,357.0 864,356.8 863,357.0 862,357.0 861,356.9 860,356.9" fill="#f2dc22" stroke-linejoin="round"/><polygon points="860,412.4 861,412.1 862,412.2 863,412.3 864,412.4 865,412.2 866,412.2 867,412.7 868,406.4 869,406.7 870,406.7 871,403.6 872,405.2 873,408.1 874,406.0 875,406.6 876,406.0 877,405.7 878,405.0 879,405.4 880,407.0 881,406.0 882,404.8 883,406.5 884,404.2 885,405.0 886,406.0 887,407.0 888,406.5 889,406.2 890,406.7 891,406.5 892,405.6 893,408.2 894,407.2 895,406.9 896,406.1 897,406.5 898,406.8 899,406.6 900,407.4 901,408.1 902,407.1 903,408.1 904,406.2 905,408.3 906,407.9 907,406.8 908,407.4 909,408.6 910,406.7 911,407.7 912,408.6 913,408.4 914,409.4 915,408.4 916,406.8 917,408.6 918,409.0 919,408.0 920,408.8 921,407.9 922,407.1 923,409.3 924,408.2 925,410.0 926,408.7 927,408.5 928,409.0 929,408.6 930,408.7 931,408.3 932,409.2 933,408.9 934,409.6 935,408.9 936,409.0 937,408.7 938,409.2 939,409.5 940,409.1 941,408.6 942,408.9 943,409.1 944,409.2 945,410.0 946,409.2 947,409.3 948,410.1 949,410.0 950,409.7 951,409.5 952,410.4 953,409.4 954,408.8 955,409.8 956,410.0 957,410.5 958,408.9 959,409.2 960,410.5 961,410.6 962,409.2 963,409.6 964,410.2 965,410.3 966,409.2 967,409.8 968,409.8 969,410.3 970,410.0 971,409.9 972,410.1 973,409.7 974,410.6 975,410.0 976,410.5 977,410.8 978,410.7 979,409.8 980,410.9 981,410.4 982,410.7 983,410.8 984,411.6 985,410.5 986,410.7 987,410.5 988,411.3 989,410.9 990,411.1 991,411.0 992,410.9 993,411.4 994,411.1 995,411.3 996,410.9 997,411.1 998,411.0 999,411.6 1000,411.9 1001,411.0 1002,411.8 1003,411.5 1004,411.6 1005,411.9 1006,412.0 1007,411.5 1008,412.2 1009,411.8 1010,411.7 1011,412.1 1012,411.9 1013,412.3 1014,411.9 1015,412.3 1016,411.9 1017,412.1 1018,412.2 1019,412.4 1020,411.9 1021,412.2 1022,412.3 1023,412.6 1024,412.6 1025,412.4 1026,412.5 1027,412.5 1028,412.5 1029,412.7 1030,412.5 1031,412.5 1032,412.4 1033,412.5 1034,412.6 1035,412.5 1036,412.6 1037,412.2 1038,412.5 1039,412.6 1040,412.6 1041,412.8 1042,412.6 1043,412.5 1044,412.3 1045,412.6 1046,412.6 1047,412.6 1048,412.4 1049,412.4 1050,412.4 1051,412.6 1052,412.3 1053,412.5 1054,412.5 1055,412.5 1056,412.5 1057,412.2 1058,412.6 1059,412.6 1060,412.4 1061,412.7 1062,412.7 1063,412.5 1064,412.5 1065,412.2 1066,412.6 1067,412.5 1068,412.8 1069,412.2 1070,412.4 1071,412.5 1072,412.5 1073,412.3 1074,412.6 1075,412.7 1076,412.6 1077,412.4 1078,412.6 1079,412.6 1080,412.5 1081,412.6 1082,412.6 1083,412.6 1084,412.4 1085,412.7 1086,412.5 1087,412.7 1088,412.3 1089,412.2 1090,412.8 1091,412.3 1092,412.4 1093,412.4 1094,412.4 1095,412.3 1096,412.7 1097,412.7 1098,412.8 1099,412.6 1100,412.7 1101,412.6 1102,412.3 1103,412.7 1104,412.5 1105,412.6 1106,412.2 1107,412.6 1108,412.6 1109,412.6 1110,412.4 1111,412.6 1112,412.7 1113,412.4 1114,412.5 1115,412.5 1116,412.4 1117,412.7 1118,412.8 1119,412.2 1120,412.4 1121,412.5 1122,412.6 1123,412.6 1124,412.5 1125,412.7 1126,412.4 1127,412.4 1128,412.4 1129,412.5 1130,412.6 1131,412.6 1132,412.5 1133,412.6 1134,412.6 1135,412.3 1136,412.5 1137,412.3 1138,412.6 1139,412.3 1140,412.4 1141,412.3 1142,412.7 1143,412.5 1144,412.6 1145,412.5 1146,412.4 1147,412.7 1148,412.6 1149,412.5 1150,412.3 1151,412.4 1152,412.4 1153,412.6 1154,412.5 1155,412.7 1156,412.5 1157,412.4 1158,412.3 1159,412.5 1160,412.3 1161,412.3 1162,412.8 1163,412.3 1164,412.5 1165,412.3 1166,412.5 1167,412.4 1168,412.6 1169,412.2 1170,412.7 1171,412.2 1172,412.4 1173,412.5 1174,412.2 1175,412.4 1176,412.4 1177,412.6 1178,412.2 1179,412.5 1180,412.5 1181,412.4 1182,412.4 1183,412.3 1184,412.6 1185,412.5 1186,412.6 1187,412.4 1188,412.5 1189,411.0 1190,409.5 1191,404.9 1192,404.9 1193,404.9 1194,404.9 1195,406.4 1196,407.0 1197,406.6 1198,405.2 1199,407.4 1200,407.0 1201,405.0 1202,405.8 1203,408.1 1204,406.5 1205,406.6 1206,406.1 1207,404.2 1208,405.3 1209,405.0 1210,407.0 1211,404.5 1212,405.2 1213,406.8 1214,404.8 1215,407.3 1216,406.3 1217,408.1 1218,406.7 1219,407.1 1220,407.4 1221,405.2 1222,406.0 1223,406.4 1224,407.7 1225,407.8 1226,406.7 1227,408.1 1228,407.7 1229,408.3 1230,407.1 1231,408.6 1232,409.1 1233,407.8 1234,407.3 1234,419.0 1233,419.9 1232,418.5 1231,418.1 1230,418.8 1229,418.7 1228,420.3 1227,419.2 1226,419.5 1225,419.2 1224,419.1 1223,419.7 1222,421.2 1221,420.8 1220,418.8 1219,419.3 1218,421.0 1217,420.7 1216,420.3 1215,420.0 1214,421.2 1213,419.6 1212,420.8 1211,421.3 1210,419.9 1209,422.1 1208,420.6 1207,421.8 1206,420.8 1205,420.5 1204,420.3 1203,419.7 1202,421.9 1201,420.8 1200,419.8 1199,420.9 1198,420.2 1197,420.6 1196,419.8 1195,420.7 1194,422.8 1193,422.3 1192,421.6 1191,422.1 1190,417.2 1189,415.7 1188,414.5 1187,414.6 1186,414.6 1185,414.6 1184,414.4 1183,414.5 1182,414.7 1181,414.6 1180,414.5 1179,414.6 1178,414.7 1177,414.5 1176,414.7 1175,414.5 1174,414.7 1173,414.4 1172,414.3 1171,414.7 1170,414.3 1169,414.8 1168,414.4 1167,414.4 1166,414.7 1165,414.6 1164,414.3 1163,414.7 1162,414.3 1161,414.6 1160,414.7 1159,414.6 1158,414.8 1157,414.5 1156,414.6 1155,414.4 1154,414.6 1153,414.5 1152,414.6 1151,414.4 1150,414.7 1149,414.4 1148,414.3 1147,414.4 1146,414.4 1145,414.4 1144,414.2 1143,414.4 1142,414.4 1141,414.6 1140,414.5 1139,414.7 1138,414.5 1137,414.7 1136,414.5 1135,414.8 1134,414.5 1133,414.3 1132,414.4 1131,414.4 1130,414.4 1129,414.7 1128,414.7 1127,414.5 1126,414.6 1125,414.4 1124,414.5 1123,414.3 1122,414.5 1121,414.5 1120,414.5 1119,414.8 1118,414.2 1117,414.3 1116,414.6 1115,414.6 1114,414.5 1113,414.4 1112,414.4 1111,414.4 1110,414.6 1109,414.5 1108,414.6 1107,414.4 1106,414.7 1105,414.5 1104,414.8 1103,414.5 1102,414.6 1101,414.3 1100,414.2 1099,414.3 1098,414.3 1097,414.3 1096,414.4 1095,414.7 1094,414.5 1093,414.3 1092,414.8 1091,414.6 1090,414.4 1089,414.7 1088,414.6 1087,414.4 1086,414.4 1085,414.4 1084,414.6 1083,414.3 1082,414.3 1081,414.6 1080,414.3 1079,414.5 1078,414.5 1077,414.6 1076,414.5 1075,414.2 1074,414.4 1073,414.6 1072,414.5 1071,414.3 1070,414.6 1069,414.5 1068,414.4 1067,414.4 1066,414.3 1065,414.8 1064,414.6 1063,414.6 1062,414.3 1061,414.3 1060,414.5 1059,414.3 1058,414.3 1057,414.6 1056,414.7 1055,414.2 1054,414.5 1053,414.7 1052,414.6 1051,414.6 1050,414.4 1049,414.5 1048,414.6 1047,414.3 1046,414.4 1045,414.6 1044,414.7 1043,414.3 1042,414.6 1041,414.3 1040,414.5 1039,414.4 1038,414.6 1037,414.8 1036,414.6 1035,414.7 1034,414.5 1033,414.3 1032,414.4 1031,414.6 1030,414.4 1029,414.4 1028,414.6 1027,414.4 1026,414.8 1025,414.7 1024,414.5 1023,414.3 1022,414.8 1021,415.0 1020,415.0 1019,414.8 1018,415.1 1017,415.0 1016,414.8 1015,414.7 1014,415.1 1013,414.8 1012,415.0 1011,415.2 1010,415.2 1009,415.6 1008,414.9 1007,415.7 1006,415.0 1005,415.4 1004,415.2 1003,415.4 1002,415.2 1001,415.6 1000,415.1 999,415.6 998,415.9 997,415.8 996,415.8 995,416.2 994,416.0 993,416.2 992,416.4 991,415.6 990,415.6 989,416.1 988,415.8 987,416.8 986,415.9 985,416.9 984,415.5 983,416.5 982,416.9 981,416.7 980,416.1 979,417.1 978,416.9 977,416.9 976,416.1 975,416.8 974,417.2 973,417.6 972,416.6 971,416.9 970,417.2 969,417.0 968,417.2 967,417.0 966,418.1 965,416.4 964,416.2 963,417.8 962,417.9 961,416.7 960,416.4 959,417.6 958,418.0 957,416.8 956,417.0 955,416.4 954,417.5 953,417.8 952,417.2 951,416.8 950,417.1 949,417.0 948,417.6 947,417.2 946,417.5 945,417.1 944,417.4 943,418.8 942,418.0 941,418.2 940,418.7 939,417.7 938,418.4 937,418.7 936,418.5 935,418.3 934,417.3 933,417.2 932,417.2 931,418.3 930,418.0 929,418.7 928,417.7 927,418.3 926,417.8 925,417.5 924,419.3 923,417.8 922,418.7 921,419.0 920,418.9 919,419.2 918,417.8 917,418.8 916,419.7 915,418.9 914,418.6 913,418.2 912,419.8 911,420.0 910,419.8 909,417.8 908,419.6 907,420.5 906,419.3 905,419.4 904,419.4 903,419.6 902,419.2 901,419.9 900,420.3 899,418.8 898,418.8 897,420.6 896,420.9 895,420.3 894,419.3 893,418.5 892,421.0 891,420.8 890,419.9 889,422.4 888,421.2 887,419.8 886,422.6 885,421.0 884,421.1 883,419.8 882,421.9 881,421.3 880,419.5 879,420.7 878,421.2 877,422.4 876,421.4 875,421.9 874,422.7 873,419.0 872,423.5 871,422.3 870,419.6 869,421.0 868,420.0 867,414.5 866,414.7 865,414.8 864,414.5 863,414.8 862,414.8 861,414.6 860,414.6" fill="#f2dc22" stroke-linejoin="round"/><text x="864" y="339" style="font:bold 12px 'Liberation Sans',sans-serif;letter-spacing:-0.55px" fill="#fff">E_Guiter_03</text><rect x="362" y="447" width="873" height="49" fill="url(#gy)"/><rect x="382" y="447" width="1" height="49" fill="#6b5d00" fill-opacity="0.33"/><rect x="401" y="447" width="1" height="49" fill="#6b5d00" fill-opacity="0.33"/><rect x="421" y="447" width="1" height="49" fill="#6b5d00" fill-opacity="0.33"/><rect x="441" y="447" width="1" height="49" fill="#6b5d00" fill-opacity="0.33"/><rect x="461" y="447" width="1" height="49" fill="#6b5d00" fill-opacity="0.33"/><rect x="481" y="447" width="1" height="49" fill="#6b5d00" fill-opacity="0.33"/><rect x="501" y="447" width="1" height="49" fill="#6b5d00" fill-opacity="0.33"/><rect x="520" y="447" width="1" height="49" fill="#6b5d00" fill-opacity="0.33"/><rect x="540" y="447" width="1" height="49" fill="#6b5d00" fill-opacity="0.33"/><rect x="560" y="447" width="1" height="49" fill="#6b5d00" fill-opacity="0.33"/><rect x="580" y="447" width="1" height="49" fill="#6b5d00" fill-opacity="0.33"/><rect x="600" y="447" width="1" height="49" fill="#6b5d00" fill-opacity="0.33"/><rect x="620" y="447" width="1" height="49" fill="#6b5d00" fill-opacity="0.33"/><rect x="640" y="447" width="1" height="49" fill="#6b5d00" fill-opacity="0.33"/><rect x="659" y="447" width="1" height="49" fill="#6b5d00" fill-opacity="0.33"/><rect x="679" y="447" width="1" height="49" fill="#6b5d00" fill-opacity="0.33"/><rect x="699" y="447" width="1" height="49" fill="#6b5d00" fill-opacity="0.33"/><rect x="719" y="447" width="1" height="49" fill="#6b5d00" fill-opacity="0.33"/><rect x="739" y="447" width="1" height="49" fill="#6b5d00" fill-opacity="0.33"/><rect x="759" y="447" width="1" height="49" fill="#6b5d00" fill-opacity="0.33"/><rect x="779" y="447" width="1" height="49" fill="#6b5d00" fill-opacity="0.33"/><rect x="798" y="447" width="1" height="49" fill="#6b5d00" fill-opacity="0.33"/><rect x="818" y="447" width="1" height="49" fill="#6b5d00" fill-opacity="0.33"/><rect x="838" y="447" width="1" height="49" fill="#6b5d00" fill-opacity="0.33"/><rect x="858" y="447" width="1" height="49" fill="#6b5d00" fill-opacity="0.33"/><rect x="878" y="447" width="1" height="49" fill="#6b5d00" fill-opacity="0.33"/><rect x="898" y="447" width="1" height="49" fill="#6b5d00" fill-opacity="0.33"/><rect x="917" y="447" width="1" height="49" fill="#6b5d00" fill-opacity="0.33"/><rect x="937" y="447" width="1" height="49" fill="#6b5d00" fill-opacity="0.33"/><rect x="957" y="447" width="1" height="49" fill="#6b5d00" fill-opacity="0.33"/><rect x="977" y="447" width="1" height="49" fill="#6b5d00" fill-opacity="0.33"/><rect x="997" y="447" width="1" height="49" fill="#6b5d00" fill-opacity="0.33"/><rect x="1017" y="447" width="1" height="49" fill="#6b5d00" fill-opacity="0.33"/><rect x="1037" y="447" width="1" height="49" fill="#6b5d00" fill-opacity="0.33"/><rect x="1056" y="447" width="1" height="49" fill="#6b5d00" fill-opacity="0.33"/><rect x="1076" y="447" width="1" height="49" fill="#6b5d00" fill-opacity="0.33"/><rect x="1096" y="447" width="1" height="49" fill="#6b5d00" fill-opacity="0.33"/><rect x="1116" y="447" width="1" height="49" fill="#6b5d00" fill-opacity="0.33"/><rect x="1136" y="447" width="1" height="49" fill="#6b5d00" fill-opacity="0.33"/><rect x="1156" y="447" width="1" height="49" fill="#6b5d00" fill-opacity="0.33"/><rect x="1176" y="447" width="1" height="49" fill="#6b5d00" fill-opacity="0.33"/><rect x="1195" y="447" width="1" height="49" fill="#6b5d00" fill-opacity="0.33"/><rect x="1215" y="447" width="1" height="49" fill="#6b5d00" fill-opacity="0.33"/><polygon points="362,477.3 363,476.9 364,477.1 365,477.4 366,475.8 367,478.1 368,477.3 369,477.1 370,476.6 371,477.6 372,476.6 373,476.5 374,477.1 375,477.1 376,476.5 377,478.0 378,477.6 379,477.6 380,476.8 381,477.0 382,477.1 383,477.0 384,477.3 385,478.0 386,477.7 387,477.3 388,477.5 389,477.0 390,476.9 391,476.8 392,476.7 393,477.7 394,476.8 395,477.2 396,477.4 397,478.1 398,478.0 399,477.0 400,476.5 401,477.7 402,476.8 403,477.4 404,477.0 405,477.8 406,479.1 407,478.4 408,477.3 409,476.9 410,477.2 411,477.0 412,477.2 413,477.9 414,477.1 415,477.9 416,477.5 417,477.5 418,477.2 419,477.1 420,477.3 421,476.5 422,477.4 423,477.8 424,477.9 425,477.7 426,477.5 427,476.7 428,477.2 429,476.8 430,476.9 431,477.1 432,477.6 433,476.9 434,477.2 435,477.8 436,477.4 437,478.1 438,477.8 439,477.3 440,478.0 441,477.4 442,477.0 443,477.7 444,476.2 445,476.5 446,477.6 447,477.5 448,476.6 449,477.5 450,477.2 451,477.8 452,476.7 453,477.7 454,477.0 455,476.6 456,476.6 457,477.3 458,477.8 459,477.9 460,477.2 461,477.6 462,477.1 463,477.4 464,477.6 465,477.1 466,477.0 467,476.7 468,477.6 469,476.7 470,478.0 471,476.7 472,477.4 473,476.1 474,477.1 475,478.1 476,477.9 477,478.6 478,478.1 479,477.0 480,476.3 481,476.8 482,476.7 483,477.4 484,476.4 485,477.2 486,476.9 487,476.9 488,477.3 489,477.6 490,478.1 491,477.5 492,477.0 493,477.4 494,478.3 495,478.4 496,477.0 497,477.2 498,477.0 499,477.7 500,477.3 501,478.0 502,477.3 503,478.2 504,477.8 505,477.2 506,476.9 507,477.5 508,478.5 509,476.7 510,477.5 511,478.1 512,477.6 513,477.1 514,477.1 515,477.5 516,476.3 517,477.3 518,476.9 519,477.8 520,477.5 521,476.9 522,476.9 523,477.4 524,478.0 525,476.7 526,477.4 527,477.8 528,477.0 529,477.2 530,476.8 531,476.6 532,476.9 533,477.3 534,476.8 535,476.4 536,477.4 537,477.3 538,476.7 539,476.4 540,476.9 541,476.9 542,476.9 543,477.8 544,477.6 545,477.4 546,477.7 547,477.9 548,477.9 549,478.1 550,478.0 551,477.9 552,478.0 553,477.9 554,478.1 555,477.9 556,477.9 557,477.9 558,478.0 559,477.8 560,478.0 561,477.8 562,478.0 563,477.9 564,478.1 565,478.0 566,477.8 567,477.9 568,477.8 569,478.0 570,478.0 571,478.1 572,477.8 573,478.1 574,477.9 575,478.0 576,477.8 577,477.4 578,477.5 579,477.6 580,476.5 581,476.9 582,477.4 583,477.0 584,476.7 585,477.4 586,476.4 587,478.1 588,476.6 589,476.5 590,477.2 591,477.1 592,476.1 593,477.3 594,476.7 595,477.3 596,476.6 597,477.5 598,477.8 599,477.6 600,477.3 601,477.1 602,478.1 603,478.2 604,477.1 605,477.5 606,477.0 607,477.1 608,477.2 609,477.0 610,477.3 611,477.0 612,476.9 613,477.9 614,476.8 615,476.9 616,477.6 617,477.3 618,477.6 619,476.4 620,476.2 621,476.4 622,477.9 623,477.2 624,477.2 625,477.5 626,477.1 627,477.1 628,477.7 629,478.0 630,477.1 631,477.3 632,478.6 633,476.4 634,477.7 635,478.0 636,477.3 637,477.1 638,477.2 639,477.1 640,478.3 641,477.4 642,478.5 643,477.4 644,478.0 645,478.0 646,476.7 647,476.7 648,476.5 649,476.5 650,478.6 651,477.5 652,477.9 653,477.5 654,477.2 655,475.9 656,477.0 657,476.6 658,476.2 659,478.6 660,477.0 661,476.9 662,477.3 663,477.1 664,476.7 665,477.1 666,477.7 667,477.7 668,477.7 669,477.9 670,477.1 671,476.2 672,478.1 673,477.0 674,477.8 675,477.1 676,477.3 677,476.3 678,477.5 679,477.9 680,476.6 681,477.2 682,477.3 683,477.6 684,476.6 685,477.2 686,477.2 687,477.5 688,477.1 689,477.5 690,477.0 691,476.7 692,476.9 693,477.5 694,476.5 695,478.2 696,477.4 697,477.9 698,478.5 699,477.1 700,477.6 701,478.0 702,478.2 703,477.0 704,477.5 705,476.9 706,477.3 707,476.8 708,477.7 709,477.3 710,478.0 711,477.8 712,477.5 713,478.1 714,477.5 715,477.6 716,476.5 717,477.2 718,478.2 719,477.1 720,477.9 721,478.0 722,477.4 723,477.0 724,476.9 725,477.6 726,478.0 727,477.7 728,477.4 729,477.1 730,476.5 731,478.1 732,478.1 733,477.7 734,477.9 735,477.3 736,477.6 737,478.1 738,477.0 739,476.6 740,478.0 741,477.0 742,476.5 743,477.1 744,478.0 745,477.1 746,477.1 747,477.6 748,477.7 749,477.7 750,476.5 751,477.9 752,477.3 753,476.9 754,476.7 755,477.0 756,477.3 757,476.7 758,477.2 759,477.1 760,478.0 761,477.5 762,477.4 763,477.3 764,477.9 765,476.9 766,478.3 767,477.8 768,477.5 769,477.0 770,478.7 771,477.3 772,477.0 773,476.9 774,478.5 775,477.8 776,477.0 777,477.0 778,477.0 779,477.7 780,476.9 781,477.2 782,478.4 783,478.3 784,476.2 785,477.3 786,477.5 787,478.0 788,477.8 789,477.5 790,477.3 791,476.6 792,477.0 793,476.1 794,476.6 795,476.4 796,476.8 797,477.9 798,477.4 799,477.3 800,477.4 801,477.8 802,478.8 803,477.9 804,477.5 805,476.6 806,477.7 807,477.5 808,477.8 809,477.9 810,477.1 811,477.1 812,476.3 813,476.9 814,477.3 815,477.4 816,477.2 817,476.8 818,478.0 819,477.0 820,477.4 821,477.9 822,477.4 823,476.8 824,477.0 825,478.1 826,477.9 827,477.8 828,477.3 829,477.3 830,477.6 831,477.7 832,476.6 833,477.3 834,477.5 835,476.8 836,477.1 837,478.0 838,478.1 839,477.7 840,477.6 841,477.8 842,477.7 843,477.2 844,478.0 845,477.8 846,476.6 847,477.5 848,476.9 849,477.5 850,476.6 851,477.4 852,478.6 853,476.8 854,478.0 855,476.9 856,476.9 857,477.2 858,477.2 859,477.6 860,477.5 861,477.7 862,478.0 863,477.7 864,477.4 865,477.3 866,477.4 867,477.7 868,476.7 869,477.5 870,478.0 871,477.5 872,477.6 873,478.2 874,478.0 875,477.9 876,477.9 877,477.6 878,477.6 879,478.1 880,477.9 881,477.7 882,477.9 883,477.7 884,478.3 885,477.8 886,477.6 887,478.1 888,477.9 889,477.9 890,477.9 891,478.1 892,477.8 893,477.7 894,477.7 895,477.9 896,477.6 897,478.0 898,477.7 899,478.1 900,477.8 901,477.9 902,477.7 903,478.0 904,477.8 905,477.9 906,477.8 907,478.0 908,477.8 909,478.0 910,478.1 911,478.0 912,477.8 913,477.8 914,477.9 915,478.1 916,478.1 917,477.8 918,478.0 919,478.0 920,477.8 921,477.9 922,477.8 923,477.8 924,478.1 925,478.0 926,477.9 927,477.9 928,477.9 929,477.8 930,477.9 931,477.8 932,478.0 933,478.2 934,477.8 935,477.9 936,478.1 937,477.9 938,477.8 939,477.9 940,478.1 941,478.0 942,477.9 943,478.0 944,477.9 945,477.8 946,477.9 947,477.9 948,478.0 949,477.8 950,478.0 951,477.9 952,477.9 953,477.9 954,478.0 955,477.8 956,478.1 957,477.9 958,477.8 959,478.1 960,477.9 961,478.1 961,478.5 960,478.7 959,478.5 958,478.8 957,478.7 956,478.5 955,478.8 954,478.6 953,478.7 952,478.8 951,478.7 950,478.6 949,478.8 948,478.5 947,478.7 946,478.8 945,478.7 944,478.8 943,478.6 942,478.7 941,478.6 940,478.5 939,478.8 938,478.8 937,478.8 936,478.6 935,478.7 934,478.7 933,478.7 932,478.8 931,478.8 930,478.8 929,478.7 928,478.7 927,478.6 926,478.8 925,478.5 924,478.7 923,478.7 922,478.7 921,478.7 920,478.7 919,478.5 918,478.9 917,478.7 916,478.7 915,478.6 914,478.5 913,478.7 912,478.8 911,478.7 910,479.1 909,478.6 908,478.8 907,478.6 906,478.8 905,478.8 904,478.4 903,478.8 902,478.7 901,478.5 900,478.7 899,478.8 898,478.8 897,478.8 896,478.6 895,478.7 894,478.7 893,478.7 892,478.7 891,478.7 890,478.5 889,478.7 888,478.8 887,478.7 886,478.7 885,478.9 884,478.8 883,478.7 882,478.7 881,478.6 880,478.8 879,478.8 878,478.8 877,478.9 876,478.9 875,478.7 874,478.8 873,479.1 872,478.7 871,479.2 870,479.1 869,478.5 868,478.4 867,479.1 866,479.2 865,479.1 864,478.6 863,478.7 862,479.3 861,479.4 860,478.8 859,478.8 858,479.0 857,479.2 856,479.3 855,478.8 854,479.8 853,478.6 852,480.3 851,479.6 850,478.8 849,478.9 848,478.5 847,479.4 846,478.3 845,479.5 844,479.1 843,479.2 842,480.2 841,479.1 840,479.5 839,480.0 838,479.2 837,479.6 836,479.2 835,479.1 834,479.0 833,479.8 832,479.0 831,480.2 830,479.6 829,479.3 828,479.6 827,479.2 826,479.1 825,479.6 824,479.2 823,478.9 822,479.2 821,480.1 820,479.6 819,479.5 818,479.2 817,479.2 816,479.7 815,479.0 814,479.8 813,478.7 812,478.6 811,478.6 810,478.6 809,480.0 808,479.4 807,478.9 806,478.9 805,478.3 804,480.1 803,479.6 802,479.9 801,479.3 800,479.1 799,478.8 798,478.7 797,479.6 796,479.1 795,478.8 794,478.5 793,478.3 792,478.2 791,478.9 790,479.8 789,479.2 788,479.1 787,479.2 786,479.2 785,479.6 784,478.3 783,479.9 782,480.7 781,478.6 780,479.3 779,479.3 778,479.0 777,479.5 776,478.3 775,479.8 774,479.6 773,478.7 772,478.2 771,479.9 770,480.2 769,479.3 768,479.5 767,480.3 766,479.6 765,479.5 764,479.0 763,479.0 762,479.2 761,479.4 760,480.4 759,479.7 758,479.4 757,478.3 756,479.0 755,478.5 754,479.2 753,478.8 752,479.9 751,479.1 750,479.0 749,478.9 748,479.8 747,479.0 746,479.4 745,478.7 744,480.5 743,479.0 742,478.9 741,479.3 740,479.6 739,479.2 738,478.6 737,479.2 736,479.9 735,479.9 734,479.5 733,478.8 732,479.6 731,479.4 730,479.0 729,479.0 728,478.8 727,479.9 726,479.2 725,479.5 724,478.9 723,479.2 722,478.7 721,479.3 720,479.0 719,478.7 718,480.0 717,479.1 716,478.6 715,478.9 714,478.7 713,480.0 712,479.2 711,479.8 710,479.5 709,479.5 708,478.9 707,479.0 706,478.7 705,478.7 704,479.7 703,479.2 702,480.0 701,480.3 700,479.8 699,478.4 698,480.0 697,479.4 696,479.6 695,480.4 694,478.0 693,478.8 692,479.2 691,478.8 690,479.3 689,479.4 688,479.6 687,478.9 686,478.4 685,479.3 684,479.0 683,478.9 682,478.9 681,479.8 680,478.5 679,479.4 678,480.0 677,478.7 676,479.7 675,479.1 674,479.0 673,479.1 672,479.4 671,478.2 670,479.7 669,479.1 668,479.0 667,479.5 666,480.0 665,479.0 664,478.9 663,479.6 662,479.8 661,478.5 660,479.1 659,480.5 658,478.5 657,479.0 656,478.5 655,478.3 654,479.5 653,479.4 652,479.8 651,479.1 650,480.0 649,479.1 648,479.2 647,478.7 646,477.9 645,480.6 644,479.6 643,479.6 642,479.9 641,479.5 640,479.6 639,479.8 638,478.7 637,479.1 636,479.1 635,479.9 634,479.0 633,479.0 632,480.2 631,479.5 630,479.0 629,479.7 628,479.2 627,478.9 626,478.7 625,479.8 624,479.0 623,478.6 622,479.1 621,479.1 620,478.8 619,479.0 618,479.3 617,479.1 616,479.4 615,478.3 614,479.0 613,479.3 612,479.3 611,479.2 610,478.8 609,478.8 608,478.6 607,478.5 606,479.0 605,479.1 604,479.8 603,480.6 602,480.5 601,478.9 600,478.6 599,480.2 598,479.0 597,479.6 596,479.4 595,479.1 594,478.0 593,479.0 592,478.6 591,479.0 590,479.0 589,479.3 588,479.1 587,480.3 586,478.8 585,478.7 584,478.9 583,479.0 582,478.7 581,478.8 580,478.1 579,479.1 578,479.4 577,478.3 576,479.0 575,478.7 574,478.7 573,478.5 572,478.8 571,478.5 570,478.6 569,478.6 568,478.8 567,478.7 566,478.8 565,478.6 564,478.5 563,478.7 562,478.6 561,478.8 560,478.6 559,478.8 558,478.6 557,478.7 556,478.7 555,478.7 554,478.5 553,478.7 552,478.6 551,478.7 550,478.6 549,478.5 548,478.7 547,478.8 546,479.0 545,478.5 544,479.1 543,479.1 542,479.3 541,479.1 540,479.4 539,478.6 538,478.5 537,479.4 536,480.0 535,478.6 534,479.4 533,480.1 532,478.9 531,478.9 530,479.4 529,479.4 528,478.5 527,479.4 526,479.7 525,478.5 524,479.3 523,479.9 522,479.1 521,478.2 520,479.4 519,479.1 518,479.1 517,479.5 516,478.7 515,478.7 514,479.5 513,479.6 512,479.8 511,480.2 510,479.8 509,479.4 508,480.8 507,479.7 506,479.0 505,479.3 504,480.1 503,480.6 502,479.4 501,479.7 500,479.5 499,479.2 498,479.4 497,479.7 496,479.4 495,480.1 494,480.3 493,479.5 492,479.7 491,479.3 490,480.1 489,479.3 488,479.3 487,479.4 486,478.6 485,478.7 484,479.0 483,479.5 482,478.3 481,479.5 480,478.7 479,479.2 478,480.4 477,479.9 476,479.6 475,479.7 474,479.8 473,478.3 472,480.0 471,478.3 470,480.2 469,478.1 468,479.8 467,478.7 466,478.5 465,479.7 464,479.7 463,479.9 462,478.7 461,479.5 460,479.4 459,480.2 458,479.6 457,479.3 456,478.0 455,479.1 454,478.7 453,480.2 452,479.3 451,479.1 450,478.8 449,479.7 448,478.2 447,479.0 446,478.9 445,478.8 444,478.7 443,479.7 442,479.5 441,478.9 440,480.6 439,478.7 438,480.4 437,479.6 436,479.0 435,479.4 434,479.0 433,479.6 432,479.0 431,478.6 430,478.7 429,478.9 428,478.7 427,479.1 426,480.2 425,479.1 424,479.7 423,480.3 422,479.8 421,479.1 420,479.5 419,479.7 418,479.3 417,479.0 416,479.3 415,480.0 414,479.2 413,480.3 412,479.3 411,479.5 410,480.0 409,479.4 408,479.8 407,479.9 406,480.5 405,479.4 404,479.0 403,479.3 402,478.8 401,480.1 400,478.6 399,479.4 398,479.7 397,479.4 396,479.7 395,478.7 394,479.3 393,479.8 392,478.1 391,478.6 390,479.7 389,479.6 388,479.0 387,479.2 386,479.7 385,479.2 384,479.1 383,478.6 382,479.3 381,478.4 380,478.9 379,479.3 378,479.2 377,479.8 376,479.2 375,479.4 374,479.9 373,478.5 372,478.7 371,479.3 370,479.2 369,479.0 368,478.5 367,480.3 366,478.5 365,478.8 364,478.4 363,479.0 362,479.2" fill="#85761f" stroke="#2e2800" stroke-width="0.7" stroke-linejoin="round"/><rect x="962" y="478" width="273" height="1" fill="#3d3705"/><rect x="382" y="7" width="1" height="9" fill="#efeaff"/><rect x="421" y="7" width="1" height="9" fill="#9d8def"/><rect x="461" y="7" width="1" height="9" fill="#9d8def"/><rect x="501" y="7" width="1" height="9" fill="#9d8def"/><rect x="540" y="7" width="1" height="9" fill="#efeaff"/><rect x="580" y="7" width="1" height="9" fill="#9d8def"/><rect x="620" y="7" width="1" height="9" fill="#9d8def"/><rect x="659" y="7" width="1" height="9" fill="#9d8def"/><rect x="699" y="7" width="1" height="9" fill="#efeaff"/><rect x="739" y="7" width="1" height="9" fill="#9d8def"/><rect x="779" y="7" width="1" height="9" fill="#9d8def"/><rect x="818" y="7" width="1" height="9" fill="#9d8def"/><rect x="858" y="7" width="1" height="25" fill="#fff"/><rect x="898" y="7" width="1" height="9" fill="#9d8def"/><rect x="937" y="7" width="1" height="9" fill="#9d8def"/><rect x="977" y="7" width="1" height="9" fill="#9d8def"/><rect x="1017" y="7" width="1" height="9" fill="#efeaff"/><rect x="1056" y="7" width="1" height="9" fill="#9d8def"/><rect x="1096" y="7" width="1" height="9" fill="#9d8def"/><rect x="1136" y="7" width="1" height="9" fill="#9d8def"/><rect x="1176" y="7" width="1" height="9" fill="#efeaff"/><rect x="1215" y="7" width="1" height="9" fill="#9d8def"/><text x="382" y="28" style="font:11px 'Liberation Mono',monospace;letter-spacing:-0.8px" fill="#ece8ff">32.2</text><text x="540" y="28" style="font:11px 'Liberation Mono',monospace;letter-spacing:-0.8px" fill="#ece8ff">32.3</text><text x="699" y="28" style="font:11px 'Liberation Mono',monospace;letter-spacing:-0.8px" fill="#ece8ff">32.4</text><text x="1017" y="28" style="font:11px 'Liberation Mono',monospace;letter-spacing:-0.8px" fill="#ece8ff">33.2</text><text x="1176" y="28" style="font:11px 'Liberation Mono',monospace;letter-spacing:-0.8px" fill="#ece8ff">33.3</text><text x="863" y="28" style="font:bold 12.5px 'Liberation Sans',sans-serif;letter-spacing:-0.3px" fill="#fff">33</text><rect x="1091" y="7" width="4" height="489" fill="#f4f4f6"/><rect x="1092" y="7" width="1.8" height="489" fill="#000"/><rect x="378" y="503" width="857" height="1" fill="#b4b6b9"/><rect x="609" y="501" width="32" height="5" rx="2.5" fill="#c4c6c9"/><g fill="none" stroke="#ff0a0a" stroke-width="2.4" stroke-linecap="round" stroke-linejoin="round"><path d="M851.6 230.5 C850.6 222 848.6 212 848.2 204 C848 192 851 182.5 856.5 179 C862 176.5 869 177.5 875 182 C883 188 888.5 199 891.5 212 C894.5 226 895.2 246 894.6 262 C893.8 278 891.2 291 885.4 299.5 C881.5 303.8 875 304.2 869.8 301 C862 296 856 286.5 853 276 C849.5 263 848 247 848 234 C848 224 848 214 848.4 205"/><path d="M919.4 241.5 C920.6 256 922.6 272 924.4 286 C926.2 300 927.8 313 929 327 C930.8 345 934 366 937.4 388.5"/><path d="M911.6 347.4 C917 351.5 921.6 357 925 363 C930 371.5 934 380 937.4 389 C939 381 940.8 374 942.6 367.5 C944.4 359.5 946.2 351 947.8 343.4"/></g></svg>
<div class="a" style="left:0;top:512px;width:1235px;height:2px;background:#53565a"></div>
<div class="a" style="left:0;top:514px;width:1235px;height:4px;background:#000"></div>
<div class="a" style="left:0;top:518px;width:1235px;height:2px;background:#53565a"></div>
<div class="a" style="left:601px;top:500px;width:42px;height:5px"></div>
<div class="tb" style="left:2px;width:25px"></div>
<div class="a" style="left:2px;top:527px;width:25px;height:25px;line-height:25px;text-align:center;font-weight:bold;font-size:14.5px;color:#4a4c50;z-index:3;text-indent:0.5px">S</div>
<div class="tb" style="left:391px;width:50px"></div>
<div class="tb" style="left:457px;width:50px"><div class="a" style="left:0;top:0;width:25px;height:25px;background:#f4f4f4"></div></div>
<div class="tb" style="left:513px;width:125px"><div class="a" style="left:0;top:0;width:25px;height:25px;background:#f4f4f4"></div></div>
<div class="tb" style="left:644px;width:50px"></div>
<div class="tb" style="left:700px;width:325px;border-radius:3px 0 0 3px;background:#191b1f;box-shadow:inset 0 0 0 1px #53565a"></div>
<div class="a" style="left:700px;top:527px;width:25px;height:25px;border-radius:3px 0 0 3px;background:#55575b;box-shadow:inset 0 0 0 1px #6c6e72"></div>
<div class="a" style="left:976px;top:528px;width:1px;height:23px;background:#53565a"></div>
<div class="ui a" style="right:447px;top:527px;font-size:12.5px;letter-spacing:-0.15px">3 Bars</div>
<div class="ui a" style="right:359px;top:527px;font-size:12.5px;letter-spacing:-0.15px">1 Beats</div>
<div class="ui a" style="right:284px;top:527px;font-size:12.5px;letter-spacing:-0.15px">66.00</div>
<div class="ui a" style="left:982px;top:527px">4/4</div>
<div class="tb" style="left:1026px;width:117px;border-radius:0 3px 3px 0"></div>
<div class="ui a" style="left:1032px;top:527px">Standard - Mix</div>
<div class="tb" style="left:1149px;width:90px"><div class="a" style="left:0;top:0;width:25px;height:25px;background:#f4f4f4"></div></div>
<div class="ui a" style="left:1180px;top:527px">E_Guiter_03</div>
<div class="a" style="left:0;top:559px;width:1235px;height:42px;background:#000"></div>
<div class="lab" style="left:0px;width:118px"><span style="display:inline-block;transform:scaleX(0.72);transform-origin:0 50%;margin-right:-30.24px">サンプリングレート</span></div>
<div class="vs" style="left:118px"></div>
<div class="lab" style="left:118px;width:99px"><span style="display:inline-block;transform:scaleX(0.72);transform-origin:0 50%;margin-right:-10.08px">ビット</span>解像度</div>
<div class="vs" style="left:217px"></div>
<div class="lab" style="left:217px;width:98px">長<span style="display:inline-block;transform:scaleX(0.72);transform-origin:0 50%;margin-right:-3.36px">さ</span></div>
<div class="vs" style="left:315px"></div>
<div class="lab" style="left:315px;width:119px">処理中</div>
<div class="vs" style="left:434px"></div>
<div class="lab" style="left:434px;width:120px">時間表示形式</div>
<div class="vs" style="left:554px"></div>
<div class="lab" style="left:554px;width:140px"><span style="display:inline-block;transform:scaleX(0.72);transform-origin:0 50%;margin-right:-16.80px">オフライン</span>編集</div>
<div class="vs" style="left:694px"></div>
<div class="lab" style="left:694px;width:98px"><span style="display:inline-block;transform:scaleX(0.72);transform-origin:0 50%;margin-right:-10.08px">ズーム</span></div>
<div class="vs" style="left:792px"></div>
<div class="lab" style="left:792px;width:196px">選択範囲</div>
<div class="vs" style="left:988px"></div>
<div class="val" style="left:9px">44.100</div>
<div class="val" style="left:93px;letter-spacing:-0.9px">kHz</div>
<div class="val" style="left:130px">16</div>
<div class="val" style="left:197px;letter-spacing:-0.7px">bit</div>
<div class="val" style="left:217px;width:98px;text-align:center">3. 0. 0. 54</div>
<div class="val" style="left:315px;width:119px;text-align:center;font-size:9px">なし</div>
<div class="val" style="left:434px;width:120px;text-align:center;font-size:9px">小節/拍</div>
<div class="val" style="left:554px;width:140px;text-align:center">0</div>
<div class="val" style="left:694px;width:98px;text-align:center">277.4612</div>
<div class="val" style="left:792px;width:196px;text-align:center">-</div>
<div class="a" style="left:0;top:601px;width:29px;height:25px;background:#202832"></div>
<div class="a" style="left:0;top:626px;width:29px;height:37px;background:#1b1d21"></div>
<div class="a" style="left:29px;top:601px;width:738px;height:25px;background:#725be3"></div>
<div class="a" style="left:767px;top:601px;width:468px;height:25px;background:#1c1e22"></div>
<div class="a" style="left:5px;top:608px;font-size:10px;line-height:12px;font-weight:bold;color:#dfe3ea;letter-spacing:-0.5px">db</div>
<div class="a" style="left:18px;top:629px;font-size:10px;line-height:12px;color:#e6e6e6">0</div>
<div class="rl" style="left:43px;top:613px;letter-spacing:-0.8px">32.4</div>
<div class="rl" style="left:333px;top:613px;letter-spacing:-0.8px">33.2</div>
<div class="rl" style="left:477px;top:613px;letter-spacing:-0.8px">33.3</div>
<div class="rl" style="left:622px;top:613px;letter-spacing:-0.8px">33.4</div>
<div class="rl" style="left:911px;top:613px;letter-spacing:-0.8px">34.2</div>
<div class="rl" style="left:1055px;top:613px;letter-spacing:-0.8px">34.3</div>
<div class="rl" style="left:1200px;top:613px;letter-spacing:-0.8px">34.4</div>
<div class="rb" style="left:193px;top:611px">33</div>
<div class="rb" style="left:771px;top:611px">34</div>
<div class="a" style="left:188px;top:626px;width:64px;height:15px;background:#3e5d7f"></div>
<div class="a" style="left:190px;top:627px;font-size:12px;line-height:14px;color:#fff;white-space:nowrap"><span style="display:inline-block;transform:scaleX(0.72);transform-origin:0 50%;margin-right:-13.44px">イベント</span>開始</div>
<svg width="1235" height="663" style="z-index:2"><circle cx="14.6" cy="539.4" r="8.2" fill="#fff"/><path d="M398.8 532.4v13.4l11.8-6.7z" fill="#fff"/><path d="M421.4 543.3h9.6a4.8 4.8 0 0 0 0-9.6h-2.6l-6.6 8.6" fill="none" stroke="#fff" stroke-width="1.5" stroke-linejoin="miter"/><path d="M449.6 530.3v9.4l-7.6-4.7z" fill="#15171a"/><path d="M448.8 531v8l-6.4-4z" fill="#fff"/><rect x="461.9" y="537.2" width="5.9" height="4.9" fill="#0a0a0a"/><rect x="469" y="531" width="1.1" height="15.6" fill="#0a0a0a"/><path d="M465.6 531h7.6l-3.1 3.2h-1.4z" fill="#0a0a0a"/><path d="M470.7 537.4h3v-2.8l4.4 5l-4.4 5v-2.9h-3z" fill="#0a0a0a"/><path d="M490.2 536h8.8l-4.4 6.9z" fill="#fff"/><rect x="519" y="533.1" width="14" height="11.9" fill="#0a0a0a"/><rect x="526.3" y="539" width="6.7" height="6" fill="#f4f4f4"/><path d="M527.2 545l5.8-5.8v5.8z" fill="#0a0a0a"/><path d="M544 546l1.3-4l10.4-9.4l2.6 2.6l-10.3 9.6z" fill="#fff"/><path d="M544 546l1.3-4l2.7 2.8z" fill="#cfd0d2"/><circle cx="573.8" cy="537.6" r="4.3" fill="none" stroke="#fff" stroke-width="1.6"/><path d="M577.3 541l4.9 4.6" stroke="#fff" stroke-width="2.2" stroke-linecap="round"/><path d="M571.3 537.6h5M573.8 535.1v5" stroke="#fff" stroke-width="1.4"/><path d="M593 536.2h2.8l3.2-3.6v12.8l-3.2-3.6h-2.8z" fill="#fff"/><path d="M607.2 533.2v5l-5.4-2.5zM607.2 539.6v5l-5.4-2.5z" fill="#fff"/><path d="M617.8 536.2h2.8l4-3.6v12.8l-4-3.6h-2.8z" fill="#fff"/><path d="M627.6 534.2a5.4 5.4 0 0 1 0 9.6" fill="none" stroke="#fff" stroke-width="1.6"/><path d="M649 533.4c8 0 7.6 12.4 15.8 12.4" fill="none" stroke="#fff" stroke-width="1.5"/><path d="M649 537.6l5.2 1.9l-5.2 1.9zM664.8 537.6l-4.8 1.9l4.8 1.9z" fill="#fff"/><path d="M675 535.3l5 4l-5 4M688 535.3l-5 4l5 4" fill="none" stroke="#fff" stroke-width="1.5"/><path d="M679.5 532h4l-2 5.4zM679.5 547h4l-2-5.4z" fill="#fff"/><ellipse cx="710.8" cy="544.3" rx="3.3" ry="2.6" transform="rotate(-25 710.8 544.3)" fill="#fff"/><rect x="712.6" y="531.5" width="1.7" height="13" fill="#fff"/><path d="M796 537.5l4-6.5l4 6.5zM796 541.5l4 6.5l4-6.5z" fill="#f0f0f0"/><path d="M884 537.5l4-6.5l4 6.5zM884 541.5l4 6.5l4-6.5z" fill="#f0f0f0"/><path d="M959 537.5l4-6.5l4 6.5zM959 541.5l4 6.5l4-6.5z" fill="#f0f0f0"/><path d="M1126 535.5h9l-4.5 7.5z" fill="#f0f0f0"/><path d="M1154 532.5h6.5v4h-4.3v10.5h-2.2zM1162.5 532.5h6.5v14.5h-2.2v-10.5h-4.3z" fill="#111"/><path d="M21.5 613h6l-3 3.2z" fill="#dfe3ea"/><rect x="43" y="601" width="1" height="9" fill="#efeaff"/><rect x="80" y="601" width="1" height="9" fill="#9d8def"/><rect x="116" y="601" width="1" height="9" fill="#9d8def"/><rect x="152" y="601" width="1" height="9" fill="#9d8def"/><rect x="188" y="601" width="1" height="25" fill="#fff"/><rect x="224" y="601" width="1" height="9" fill="#9d8def"/><rect x="260" y="601" width="1" height="9" fill="#9d8def"/><rect x="296" y="601" width="1" height="9" fill="#9d8def"/><rect x="333" y="601" width="1" height="9" fill="#efeaff"/><rect x="369" y="601" width="1" height="9" fill="#9d8def"/><rect x="405" y="601" width="1" height="9" fill="#9d8def"/><rect x="441" y="601" width="1" height="9" fill="#9d8def"/><rect x="477" y="601" width="1" height="9" fill="#efeaff"/><rect x="513" y="601" width="1" height="9" fill="#9d8def"/><rect x="549" y="601" width="1" height="9" fill="#9d8def"/><rect x="585" y="601" width="1" height="9" fill="#9d8def"/><rect x="622" y="601" width="1" height="9" fill="#efeaff"/><rect x="658" y="601" width="1" height="9" fill="#9d8def"/><rect x="694" y="601" width="1" height="9" fill="#9d8def"/><rect x="730" y="601" width="1" height="9" fill="#9d8def"/><rect x="766" y="601" width="1" height="25" fill="#fff"/><rect x="802" y="601" width="1" height="9" fill="#5d6065"/><rect x="838" y="601" width="1" height="9" fill="#5d6065"/><rect x="874" y="601" width="1" height="9" fill="#5d6065"/><rect x="911" y="601" width="1" height="9" fill="#c8cacd"/><rect x="947" y="601" width="1" height="9" fill="#5d6065"/><rect x="983" y="601" width="1" height="9" fill="#5d6065"/><rect x="1019" y="601" width="1" height="9" fill="#5d6065"/><rect x="1055" y="601" width="1" height="9" fill="#c8cacd"/><rect x="1091" y="601" width="1" height="9" fill="#5d6065"/><rect x="1127" y="601" width="1" height="9" fill="#5d6065"/><rect x="1164" y="601" width="1" height="9" fill="#5d6065"/><rect x="1200" y="601" width="1" height="9" fill="#c8cacd"/><path d="M758 601h9v9z" fill="#fff"/><line x1="189" y1="642.4" x2="189" y2="663" stroke="#476a92" stroke-width="2" stroke-dasharray="1.7 2.3"/><rect x="400" y="601" width="4" height="62" fill="#f4f4f6"/><rect x="401" y="601" width="2" height="62" fill="#000"/><rect x="988" y="563" width="1" height="35" fill="#6f87a8"/></svg>
</body></html>
